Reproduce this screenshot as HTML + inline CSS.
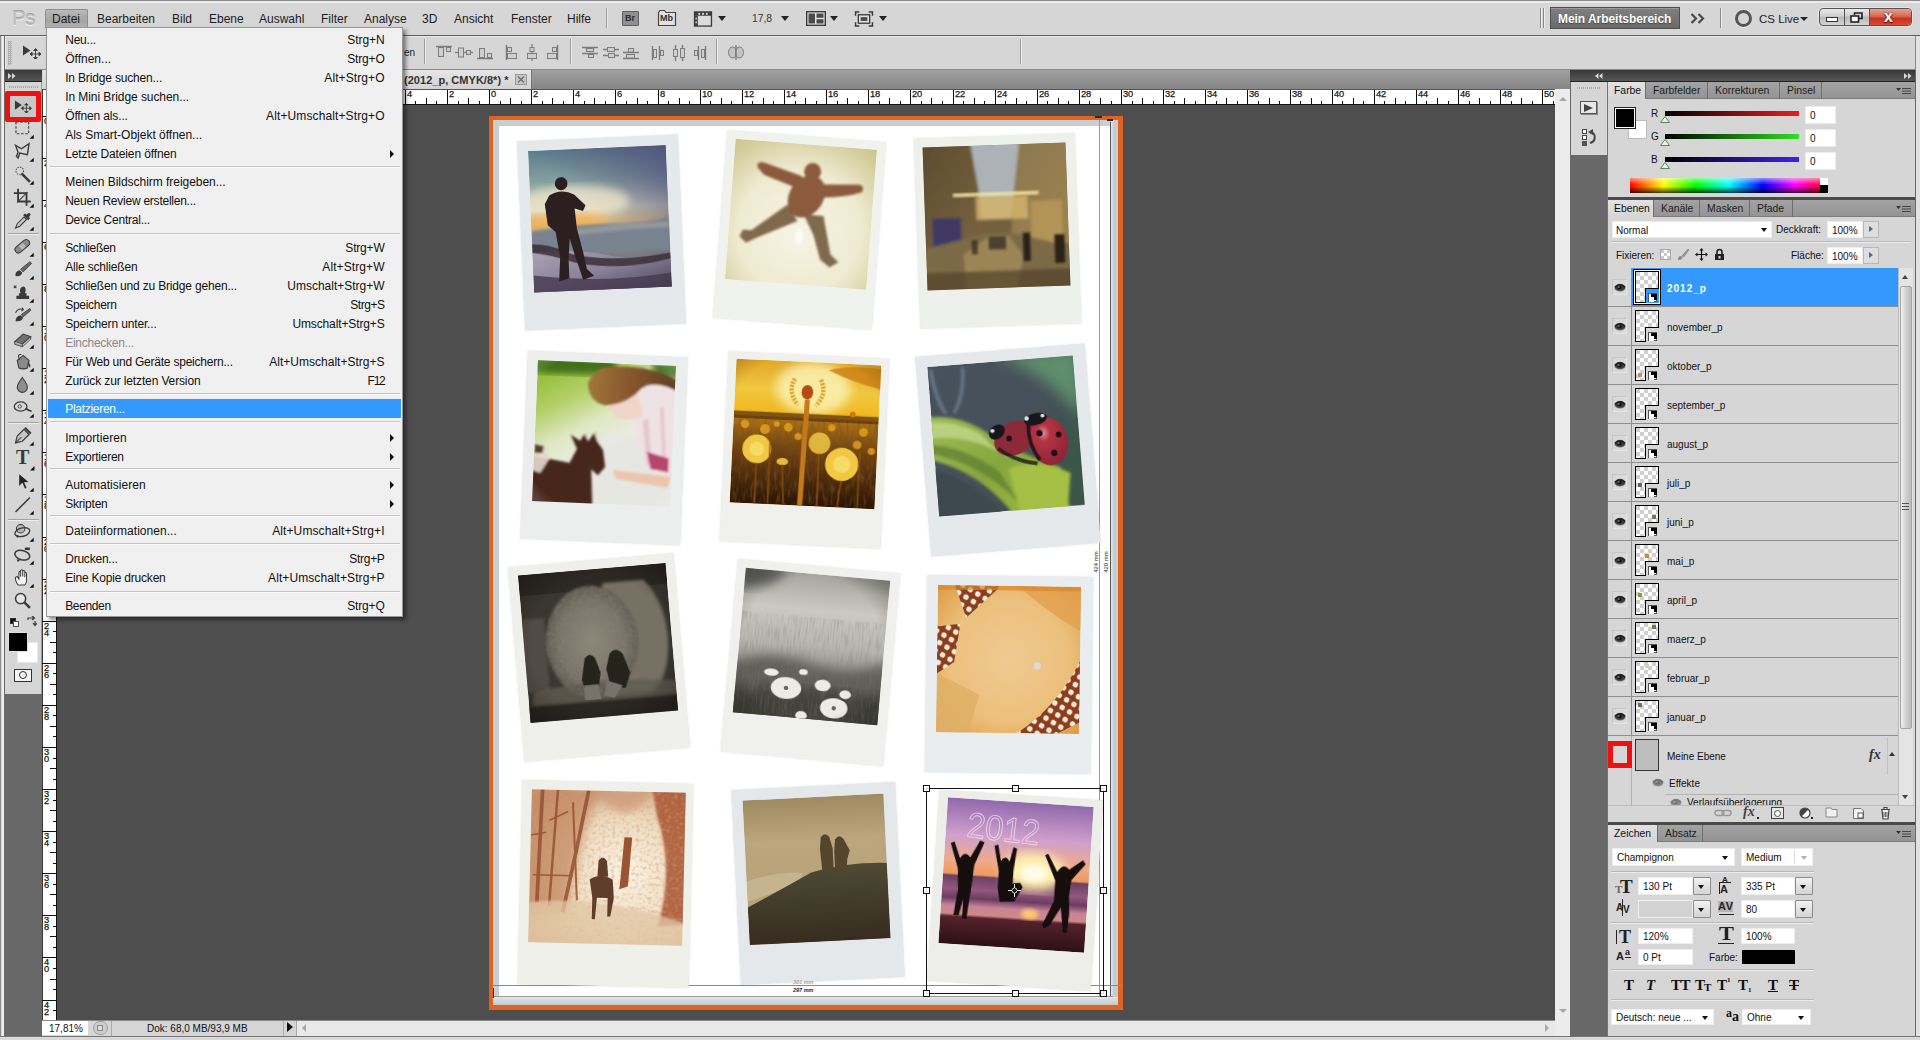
<!DOCTYPE html><html lang="de"><head><meta charset="utf-8"><title>Photoshop</title><style>
*{box-sizing:border-box;margin:0;padding:0}
html,body{width:1920px;height:1040px;overflow:hidden;background:#d6d6d6;font-family:"Liberation Sans",sans-serif;font-size:12px;color:#111}
.a{position:absolute}
.t{position:absolute;white-space:pre;line-height:1}
.mi{position:absolute;left:19px;white-space:pre;line-height:14px;height:14px;font-size:12px;color:#111}
.ms{position:absolute;right:19px;white-space:pre;line-height:14px;height:14px;font-size:12px;color:#111;text-align:right}
.sep{position:absolute;left:3px;right:2px;height:1px;background:#c4c4c4;border-bottom:1px solid #fafafa;box-sizing:content-box}
.arr{position:absolute;right:8px;width:0;height:0;border-left:4px solid #111;border-top:4px solid transparent;border-bottom:4px solid transparent}
.ptab{position:absolute;top:0;height:17px;font-size:11px;line-height:16px;color:#1a1a1a;padding-left:7px;border-right:1px solid #777;text-shadow:0 0 0.4px #222}
.ptab.on{background:#d6d6d6;border-right:none;color:#111}
.inp{position:absolute;background:#fff;border:1px solid #e8e8e8;font-size:10px;line-height:1;color:#111;white-space:pre}
.lname{position:absolute;left:60px;font-size:10px;line-height:12px;white-space:pre;color:#111}
</style></head><body>
<div class="a" style="left:0px;top:0px;width:1920px;height:1px;background:#8c8c8c"></div>
<div class="a" style="left:0px;top:1px;width:1920px;height:2px;background:#ececec"></div>
<div class="a" style="left:0px;top:35px;width:1920px;height:1px;background:#5c5c5c"></div>
<div class="t" style="left:12px;top:7px;font-size:20.5px;font-weight:normal;color:#bdbdbd;letter-spacing:-0.5px;text-shadow:0 1px 0 #f2f2f2,0 -1px 0 #a2a2a2;line-height:22px">Ps</div>
<div class="a" style="left:45px;top:9px;width:43px;height:19px;background:linear-gradient(#b9b9b9,#a4a4a4 60%,#b4b4b4);border:1px solid #8f8f8f;border-bottom:none;border-radius:2px 2px 0 0"></div>
<div class="t" style="left:52px;top:12px;font-size:12px;line-height:14px;color:#1c1c1c">Datei</div>
<div class="t" style="left:97px;top:12px;font-size:12px;line-height:14px;color:#1c1c1c">Bearbeiten</div>
<div class="t" style="left:172px;top:12px;font-size:12px;line-height:14px;color:#1c1c1c">Bild</div>
<div class="t" style="left:209px;top:12px;font-size:12px;line-height:14px;color:#1c1c1c">Ebene</div>
<div class="t" style="left:259px;top:12px;font-size:12px;line-height:14px;color:#1c1c1c">Auswahl</div>
<div class="t" style="left:321px;top:12px;font-size:12px;line-height:14px;color:#1c1c1c">Filter</div>
<div class="t" style="left:364px;top:12px;font-size:12px;line-height:14px;color:#1c1c1c">Analyse</div>
<div class="t" style="left:422px;top:12px;font-size:12px;line-height:14px;color:#1c1c1c">3D</div>
<div class="t" style="left:454px;top:12px;font-size:12px;line-height:14px;color:#1c1c1c">Ansicht</div>
<div class="t" style="left:511px;top:12px;font-size:12px;line-height:14px;color:#1c1c1c">Fenster</div>
<div class="t" style="left:567px;top:12px;font-size:12px;line-height:14px;color:#1c1c1c">Hilfe</div>
<div class="a" style="left:606px;top:8px;width:1px;height:20px;background:#9a9a9a"></div>
<div class="a" style="left:607px;top:8px;width:1px;height:20px;background:#ececec"></div>
<div class="a" style="left:622px;top:11px;width:17px;height:15px;background:#8f8f8f;border:1px solid #5e5e5e;border-radius:1px"></div>
<div class="t" style="left:625px;top:14px;font-size:9px;font-weight:bold;color:#2e2e2e">Br</div>
<svg class="a" style="left:657px;top:9px" width="20" height="18" viewBox="0 0 20 18"><path d="M1.5 3.5 L1.5 16.5 L18.5 16.5 L18.5 3.5 L9 3.5 L7.5 1.5 L3 1.5 Z" fill="#e2e2e2" stroke="#444" stroke-width="1.2"/></svg>
<div class="t" style="left:660px;top:14px;font-size:9px;font-weight:bold;color:#2e2e2e">Mb</div>
<svg class="a" style="left:693px;top:11px" width="20" height="16" viewBox="0 0 20 17"><rect x="1" y="1" width="18" height="15" fill="#dcdcdc" stroke="#3c3c3c" stroke-width="1.4"/><rect x="1" y="1" width="18" height="4" fill="#3c3c3c"/><rect x="1" y="5" width="3.5" height="11" fill="#3c3c3c"/><g fill="#dcdcdc"><rect x="5" y="2" width="2" height="2"/><rect x="9" y="2" width="2" height="2"/><rect x="13" y="2" width="2" height="2"/><rect x="2" y="7" width="1.5" height="2"/><rect x="2" y="11" width="1.5" height="2"/></g></svg>
<div class="a" style="left:718px;top:16px;width:0;height:0;border-left:4.0px solid transparent;border-right:4.0px solid transparent;border-top:5px solid #222"></div>
<div class="t" style="left:752px;top:14px;font-size:10.3px;color:#333">17,8</div>
<div class="a" style="left:781px;top:16px;width:0;height:0;border-left:4.0px solid transparent;border-right:4.0px solid transparent;border-top:5px solid #222"></div>
<svg class="a" style="left:806px;top:11px" width="20" height="15" viewBox="0 0 20 15"><rect x="0.7" y="0.7" width="18.6" height="13.6" fill="#e6e6e6" stroke="#3a3a3a" stroke-width="1.4"/><rect x="2.5" y="2.5" width="6.5" height="10" fill="#4a4a4a"/><rect x="10.5" y="2.5" width="7" height="4.3" fill="#4a4a4a"/><rect x="10.5" y="8.2" width="7" height="4.3" fill="#4a4a4a"/></svg>
<div class="a" style="left:830px;top:16px;width:0;height:0;border-left:4.0px solid transparent;border-right:4.0px solid transparent;border-top:5px solid #222"></div>
<svg class="a" style="left:854px;top:11px" width="20" height="16" viewBox="0 0 20 17"><path d="M1 5V1H5M15 1H19V5M19 12V16H15M5 16H1V12" fill="none" stroke="#3a3a3a" stroke-width="1.6"/><rect x="4" y="4" width="12" height="9" fill="#e0e0e0" stroke="#3a3a3a" stroke-width="1.4"/><rect x="6.5" y="6.5" width="7" height="4" fill="#4a4a4a"/></svg>
<div class="a" style="left:879px;top:16px;width:0;height:0;border-left:4.0px solid transparent;border-right:4.0px solid transparent;border-top:5px solid #222"></div>
<div class="a" style="left:1540px;top:8px;width:1px;height:20px;background:#8a8a8a"></div>
<div class="a" style="left:1541px;top:8px;width:1px;height:20px;background:#efefef"></div>
<div class="a" style="left:1543px;top:8px;width:1px;height:20px;background:#8a8a8a"></div>
<div class="a" style="left:1544px;top:8px;width:1px;height:20px;background:#efefef"></div>
<div class="a" style="left:1550px;top:7px;width:130px;height:22px;background:linear-gradient(#808080,#6a6a6a);border:1px solid #4f4f4f;box-shadow:inset 0 1px 0 #999"></div>
<div class="t" style="left:1558px;top:12px;font-size:12px;font-weight:bold;color:#fff;line-height:14px;text-shadow:0 1px 1px #444;letter-spacing:-0.05px">Mein Arbeitsbereich</div>
<svg class="a" style="left:1690px;top:13px" width="16" height="11" viewBox="0 0 16 11"><path d="M1.5 1 L6 5.5 L1.5 10 M8.5 1 L13 5.5 L8.5 10" fill="none" stroke="#4a4a4a" stroke-width="2.2"/></svg>
<div class="a" style="left:1720px;top:8px;width:1px;height:20px;background:#8a8a8a"></div>
<div class="a" style="left:1721px;top:8px;width:1px;height:20px;background:#efefef"></div>
<div class="a" style="left:1735px;top:10px;width:17px;height:17px;border:3.5px solid #555;border-radius:50%;box-shadow:0 1px 0 #eee"></div>
<div class="t" style="left:1759px;top:12px;font-size:11.5px;color:#222;line-height:14px">CS Live</div>
<div class="a" style="left:1800px;top:17px;width:0;height:0;border-left:4.0px solid transparent;border-right:4.0px solid transparent;border-top:4px solid #222"></div>
<div class="a" style="left:1819px;top:8px;width:93px;height:18px;border:1px solid #555;border-radius:4px;background:linear-gradient(#e9e9e9,#cfcfcf 45%,#b9b9b9 50%,#d4d4d4);overflow:hidden;box-shadow:0 0 0 1px #e6e6e6"><div class="a" style="left:24px;top:0;width:1px;height:18px;background:#555"></div><div class="a" style="left:49px;top:0;width:44px;height:18px;background:linear-gradient(#e8a090,#d8604c 45%,#c8301c 50%,#d8553f);border-left:1px solid #555"></div><div class="a" style="left:6px;top:8px;width:12px;height:5px;background:#fff;border:1px solid #333"></div><svg class="a" style="left:30px;top:3px" width="13" height="11" viewBox="0 0 13 11"><path d="M4.5 3V1H12V6.5H9" fill="none" stroke="#222" stroke-width="1.6"/><rect x="1" y="4" width="7.5" height="6" fill="#fff" stroke="#222" stroke-width="1.6"/></svg><div class="t" style="left:64px;top:-1px;font-size:16px;font-weight:bold;color:#fff;text-shadow:0 0 2px #611,0 1px 1px #400;line-height:18px">x</div></div>
<div class="a" style="left:4px;top:36px;width:1912px;height:34px;background:#d6d6d6;border:1px solid #8a8a8a;border-top:none;box-shadow:inset 1px 1px 0 #ececec"></div>
<div class="a" style="left:8px;top:41px;width:4px;height:24px;background:repeating-linear-gradient(#a8a8a8 0 1px,transparent 1px 2px),repeating-linear-gradient(90deg,#a8a8a8 0 1px,transparent 1px 2px);opacity:.8"></div>
<svg class="a" style="left:22px;top:45px" width="20" height="14" viewBox="0 0 20 14"><path d="M1 0.5 L1 10.5 L8.5 5.5 Z" fill="#3a3a3a"/><path d="M13.5 4.5V13.5M9 9H18M13.5 3.5l-1.8 2h3.6zM13.5 14.5l-1.8 -2h3.6zM8 9l2 -1.8v3.6zM19 9l-2 -1.8v3.6z" stroke="#3a3a3a" stroke-width=".9" fill="#3a3a3a"/></svg>
<div class="t" style="left:404px;top:48px;font-size:10px;color:#222">en</div>
<div class="a" style="left:424px;top:39px;width:1px;height:25px;background:#9c9c9c"></div>
<div class="a" style="left:425px;top:39px;width:1px;height:25px;background:#eee"></div>
<div class="a" style="left:570px;top:39px;width:1px;height:25px;background:#9c9c9c"></div>
<div class="a" style="left:571px;top:39px;width:1px;height:25px;background:#eee"></div>
<div class="a" style="left:716px;top:39px;width:1px;height:25px;background:#9c9c9c"></div>
<div class="a" style="left:717px;top:39px;width:1px;height:25px;background:#eee"></div>
<div class="a" style="left:1020px;top:39px;width:1px;height:25px;background:#9c9c9c"></div>
<div class="a" style="left:1021px;top:39px;width:1px;height:25px;background:#eee"></div>
<svg class="a" style="left:435px;top:44px" width="18" height="17" viewBox="0 0 18 17"><path d="M1 2.5H17" stroke="#7c7c7c" stroke-width="1.5"/><rect x="3.5" y="3.5" width="5" height="9" fill="#cfcfcf" stroke="#7c7c7c"/><rect x="11.5" y="3.5" width="4" height="4" fill="#cfcfcf" stroke="#7c7c7c"/></svg>
<svg class="a" style="left:455px;top:44px" width="18" height="17" viewBox="0 0 18 17"><path d="M0 8.5H18" stroke="#7c7c7c" stroke-width="1.3"/><rect x="3.5" y="4" width="5" height="9" fill="#cfcfcf" stroke="#7c7c7c"/><rect x="11.5" y="6.5" width="4" height="4" fill="#cfcfcf" stroke="#7c7c7c"/></svg>
<svg class="a" style="left:476px;top:44px" width="18" height="17" viewBox="0 0 18 17"><path d="M1 14.5H17" stroke="#7c7c7c" stroke-width="1.5"/><rect x="3.5" y="4.5" width="5" height="9" fill="#cfcfcf" stroke="#7c7c7c"/><rect x="11.5" y="9.5" width="4" height="4" fill="#cfcfcf" stroke="#7c7c7c"/></svg>
<svg class="a" style="left:503px;top:44px" width="18" height="17" viewBox="0 0 18 17"><path d="M3.5 1V16" stroke="#7c7c7c" stroke-width="1.5"/><rect x="4.5" y="3.5" width="4" height="4" fill="#cfcfcf" stroke="#7c7c7c"/><rect x="4.5" y="9.5" width="9" height="5" fill="#cfcfcf" stroke="#7c7c7c"/></svg>
<svg class="a" style="left:523px;top:44px" width="18" height="17" viewBox="0 0 18 17"><path d="M9 0V17" stroke="#7c7c7c" stroke-width="1.3"/><rect x="7" y="3.5" width="4" height="4" fill="#cfcfcf" stroke="#7c7c7c"/><rect x="4.5" y="9.5" width="9" height="5" fill="#cfcfcf" stroke="#7c7c7c"/></svg>
<svg class="a" style="left:543px;top:44px" width="18" height="17" viewBox="0 0 18 17"><path d="M14.5 1V16" stroke="#7c7c7c" stroke-width="1.5"/><rect x="9.500" y="3.5" width="4" height="4" fill="#cfcfcf" stroke="#7c7c7c"/><rect x="4.5" y="9.500" width="9" height="5" fill="#cfcfcf" stroke="#7c7c7c"/></svg>
<svg class="a" style="left:581px;top:44px" width="18" height="17" viewBox="0 0 18 17"><path d="M1 3.5H17M1 9.500H17" stroke="#7c7c7c" stroke-width="1.4"/><rect x="5.500" y="4.500" width="7" height="3" fill="#cfcfcf" stroke="#7c7c7c"/><rect x="7.500" y="10.500" width="5" height="3" fill="#cfcfcf" stroke="#7c7c7c"/></svg>
<svg class="a" style="left:602px;top:44px" width="18" height="17" viewBox="0 0 18 17"><path d="M1 5.500H17M1 11.500H17" stroke="#7c7c7c" stroke-width="1.4"/><rect x="5.500" y="3.500" width="7" height="4" fill="#cfcfcf" stroke="#7c7c7c"/><rect x="6.500" y="9.500" width="6" height="4" fill="#cfcfcf" stroke="#7c7c7c"/></svg>
<svg class="a" style="left:622px;top:44px" width="18" height="17" viewBox="0 0 18 17"><path d="M1 8.500H17M1 14.500H17" stroke="#7c7c7c" stroke-width="1.4"/><rect x="6.500" y="4.500" width="5" height="3.500" fill="#cfcfcf" stroke="#7c7c7c"/><rect x="4.500" y="10.500" width="8" height="3.500" fill="#cfcfcf" stroke="#7c7c7c"/></svg>
<svg class="a" style="left:649px;top:44px" width="18" height="17" viewBox="0 0 18 17"><path d="M3.500 2V16M10.500 2V16" stroke="#7c7c7c" stroke-width="1.4"/><rect x="4.500" y="5.500" width="3" height="8" fill="#cfcfcf" stroke="#7c7c7c"/><rect x="11.500" y="6.500" width="3" height="5" fill="#cfcfcf" stroke="#7c7c7c"/></svg>
<svg class="a" style="left:670px;top:44px" width="18" height="17" viewBox="0 0 18 17"><path d="M5.500 1V17M12.500 1V17" stroke="#7c7c7c" stroke-width="1.4"/><rect x="3.500" y="5.500" width="4" height="7" fill="#cfcfcf" stroke="#7c7c7c"/><rect x="10.500" y="4.500" width="4" height="9" fill="#cfcfcf" stroke="#7c7c7c"/></svg>
<svg class="a" style="left:690px;top:44px" width="18" height="17" viewBox="0 0 18 17"><path d="M8.500 2V16M15.500 2V16" stroke="#7c7c7c" stroke-width="1.4"/><rect x="4.500" y="6.500" width="3" height="5" fill="#cfcfcf" stroke="#7c7c7c"/><rect x="11.500" y="5.500" width="3" height="8" fill="#cfcfcf" stroke="#7c7c7c"/></svg>
<svg class="a" style="left:727px;top:44px" width="18" height="17" viewBox="0 0 18 17"><ellipse cx="5.500" cy="8.500" rx="4" ry="5.500" fill="#c4c4c4" stroke="#7c7c7c"/><ellipse cx="12.500" cy="8.500" rx="4" ry="5.500" fill="#c4c4c4" stroke="#7c7c7c"/><path d="M9 1V16" stroke="#7c7c7c" stroke-width="1.4"/></svg>
<div class="a" style="left:43px;top:70px;width:1527px;height:19px;background:linear-gradient(#a0a0a0,#868686)"></div>
<div class="a" style="left:43px;top:70px;width:489px;height:19px;background:linear-gradient(#e6e6e6,#d3d3d3);border-right:1px solid #777"></div>
<div class="t" style="left:404px;top:74px;font-size:11px;font-weight:bold;color:#333;line-height:12px;letter-spacing:.03px">(2012_p, CMYK/8*) *</div>
<div class="a" style="left:515px;top:74px;width:12px;height:11px;background:#c6c6c6;border:1px solid #9a9a9a"><svg width="10" height="9" viewBox="0 0 10 9" style="display:block"><path d="M2 1.5L8 7.5M8 1.5L2 7.500" stroke="#6e6e6e" stroke-width="1.3"/></svg></div>
<div class="a" style="left:42px;top:89px;width:1513px;height:15px;background:#fff;border-top:1px solid #555"></div>
<div class="a" style="left:42px;top:104px;width:1513px;height:1px;background:#111"></div>
<svg class="a" style="left:57px;top:89px" width="1499" height="16" viewBox="57 89 1499 16" shape-rendering="crispEdges"><rect x="257" y="98" width="1" height="6" fill="#111"/><rect x="268" y="101" width="1" height="3" fill="#111"/><rect x="278" y="90" width="1" height="14" fill="#111"/><rect x="289" y="101" width="1" height="3" fill="#111"/><rect x="300" y="98" width="1" height="6" fill="#111"/><rect x="310" y="101" width="1" height="3" fill="#111"/><rect x="321" y="90" width="1" height="14" fill="#111"/><rect x="331" y="101" width="1" height="3" fill="#111"/><rect x="342" y="98" width="1" height="6" fill="#111"/><rect x="352" y="101" width="1" height="3" fill="#111"/><rect x="363" y="90" width="1" height="14" fill="#111"/><rect x="373" y="101" width="1" height="3" fill="#111"/><rect x="384" y="98" width="1" height="6" fill="#111"/><rect x="394" y="101" width="1" height="3" fill="#111"/><rect x="405" y="90" width="1" height="14" fill="#111"/><rect x="415" y="101" width="1" height="3" fill="#111"/><rect x="426" y="98" width="1" height="6" fill="#111"/><rect x="436" y="101" width="1" height="3" fill="#111"/><rect x="447" y="90" width="1" height="14" fill="#111"/><rect x="458" y="101" width="1" height="3" fill="#111"/><rect x="468" y="98" width="1" height="6" fill="#111"/><rect x="479" y="101" width="1" height="3" fill="#111"/><rect x="489" y="90" width="1" height="14" fill="#111"/><rect x="500" y="101" width="1" height="3" fill="#111"/><rect x="510" y="98" width="1" height="6" fill="#111"/><rect x="521" y="101" width="1" height="3" fill="#111"/><rect x="531" y="90" width="1" height="14" fill="#111"/><rect x="542" y="101" width="1" height="3" fill="#111"/><rect x="552" y="98" width="1" height="6" fill="#111"/><rect x="563" y="101" width="1" height="3" fill="#111"/><rect x="573" y="90" width="1" height="14" fill="#111"/><rect x="584" y="101" width="1" height="3" fill="#111"/><rect x="594" y="98" width="1" height="6" fill="#111"/><rect x="605" y="101" width="1" height="3" fill="#111"/><rect x="615" y="90" width="1" height="14" fill="#111"/><rect x="626" y="101" width="1" height="3" fill="#111"/><rect x="637" y="98" width="1" height="6" fill="#111"/><rect x="647" y="101" width="1" height="3" fill="#111"/><rect x="658" y="90" width="1" height="14" fill="#111"/><rect x="668" y="101" width="1" height="3" fill="#111"/><rect x="679" y="98" width="1" height="6" fill="#111"/><rect x="689" y="101" width="1" height="3" fill="#111"/><rect x="700" y="90" width="1" height="14" fill="#111"/><rect x="710" y="101" width="1" height="3" fill="#111"/><rect x="721" y="98" width="1" height="6" fill="#111"/><rect x="731" y="101" width="1" height="3" fill="#111"/><rect x="742" y="90" width="1" height="14" fill="#111"/><rect x="752" y="101" width="1" height="3" fill="#111"/><rect x="763" y="98" width="1" height="6" fill="#111"/><rect x="773" y="101" width="1" height="3" fill="#111"/><rect x="784" y="90" width="1" height="14" fill="#111"/><rect x="795" y="101" width="1" height="3" fill="#111"/><rect x="805" y="98" width="1" height="6" fill="#111"/><rect x="816" y="101" width="1" height="3" fill="#111"/><rect x="826" y="90" width="1" height="14" fill="#111"/><rect x="837" y="101" width="1" height="3" fill="#111"/><rect x="847" y="98" width="1" height="6" fill="#111"/><rect x="858" y="101" width="1" height="3" fill="#111"/><rect x="868" y="90" width="1" height="14" fill="#111"/><rect x="879" y="101" width="1" height="3" fill="#111"/><rect x="889" y="98" width="1" height="6" fill="#111"/><rect x="900" y="101" width="1" height="3" fill="#111"/><rect x="910" y="90" width="1" height="14" fill="#111"/><rect x="921" y="101" width="1" height="3" fill="#111"/><rect x="931" y="98" width="1" height="6" fill="#111"/><rect x="942" y="101" width="1" height="3" fill="#111"/><rect x="953" y="90" width="1" height="14" fill="#111"/><rect x="963" y="101" width="1" height="3" fill="#111"/><rect x="974" y="98" width="1" height="6" fill="#111"/><rect x="984" y="101" width="1" height="3" fill="#111"/><rect x="995" y="90" width="1" height="14" fill="#111"/><rect x="1005" y="101" width="1" height="3" fill="#111"/><rect x="1016" y="98" width="1" height="6" fill="#111"/><rect x="1026" y="101" width="1" height="3" fill="#111"/><rect x="1037" y="90" width="1" height="14" fill="#111"/><rect x="1047" y="101" width="1" height="3" fill="#111"/><rect x="1058" y="98" width="1" height="6" fill="#111"/><rect x="1068" y="101" width="1" height="3" fill="#111"/><rect x="1079" y="90" width="1" height="14" fill="#111"/><rect x="1089" y="101" width="1" height="3" fill="#111"/><rect x="1100" y="98" width="1" height="6" fill="#111"/><rect x="1111" y="101" width="1" height="3" fill="#111"/><rect x="1121" y="90" width="1" height="14" fill="#111"/><rect x="1132" y="101" width="1" height="3" fill="#111"/><rect x="1142" y="98" width="1" height="6" fill="#111"/><rect x="1153" y="101" width="1" height="3" fill="#111"/><rect x="1163" y="90" width="1" height="14" fill="#111"/><rect x="1174" y="101" width="1" height="3" fill="#111"/><rect x="1184" y="98" width="1" height="6" fill="#111"/><rect x="1195" y="101" width="1" height="3" fill="#111"/><rect x="1205" y="90" width="1" height="14" fill="#111"/><rect x="1216" y="101" width="1" height="3" fill="#111"/><rect x="1226" y="98" width="1" height="6" fill="#111"/><rect x="1237" y="101" width="1" height="3" fill="#111"/><rect x="1247" y="90" width="1" height="14" fill="#111"/><rect x="1258" y="101" width="1" height="3" fill="#111"/><rect x="1269" y="98" width="1" height="6" fill="#111"/><rect x="1279" y="101" width="1" height="3" fill="#111"/><rect x="1290" y="90" width="1" height="14" fill="#111"/><rect x="1300" y="101" width="1" height="3" fill="#111"/><rect x="1311" y="98" width="1" height="6" fill="#111"/><rect x="1321" y="101" width="1" height="3" fill="#111"/><rect x="1332" y="90" width="1" height="14" fill="#111"/><rect x="1342" y="101" width="1" height="3" fill="#111"/><rect x="1353" y="98" width="1" height="6" fill="#111"/><rect x="1363" y="101" width="1" height="3" fill="#111"/><rect x="1374" y="90" width="1" height="14" fill="#111"/><rect x="1384" y="101" width="1" height="3" fill="#111"/><rect x="1395" y="98" width="1" height="6" fill="#111"/><rect x="1405" y="101" width="1" height="3" fill="#111"/><rect x="1416" y="90" width="1" height="14" fill="#111"/><rect x="1426" y="101" width="1" height="3" fill="#111"/><rect x="1437" y="98" width="1" height="6" fill="#111"/><rect x="1448" y="101" width="1" height="3" fill="#111"/><rect x="1458" y="90" width="1" height="14" fill="#111"/><rect x="1469" y="101" width="1" height="3" fill="#111"/><rect x="1479" y="98" width="1" height="6" fill="#111"/><rect x="1490" y="101" width="1" height="3" fill="#111"/><rect x="1500" y="90" width="1" height="14" fill="#111"/><rect x="1511" y="101" width="1" height="3" fill="#111"/><rect x="1521" y="98" width="1" height="6" fill="#111"/><rect x="1532" y="101" width="1" height="3" fill="#111"/><rect x="1542" y="90" width="1" height="14" fill="#111"/><rect x="1553" y="101" width="1" height="3" fill="#111"/></svg>
<div class="t" style="left:70px;top:90px;font-size:9.3px;color:#111;line-height:9px;letter-spacing:-0.1px;-webkit-text-stroke:.25px #222">20</div>
<div class="t" style="left:112px;top:90px;font-size:9.3px;color:#111;line-height:9px;letter-spacing:-0.1px;-webkit-text-stroke:.25px #222">18</div>
<div class="t" style="left:154px;top:90px;font-size:9.3px;color:#111;line-height:9px;letter-spacing:-0.1px;-webkit-text-stroke:.25px #222">16</div>
<div class="t" style="left:196px;top:90px;font-size:9.3px;color:#111;line-height:9px;letter-spacing:-0.1px;-webkit-text-stroke:.25px #222">14</div>
<div class="t" style="left:238px;top:90px;font-size:9.3px;color:#111;line-height:9px;letter-spacing:-0.1px;-webkit-text-stroke:.25px #222">12</div>
<div class="t" style="left:280px;top:90px;font-size:9.3px;color:#111;line-height:9px;letter-spacing:-0.1px;-webkit-text-stroke:.25px #222">10</div>
<div class="t" style="left:323px;top:90px;font-size:9.3px;color:#111;line-height:9px;letter-spacing:-0.1px;-webkit-text-stroke:.25px #222">8</div>
<div class="t" style="left:365px;top:90px;font-size:9.3px;color:#111;line-height:9px;letter-spacing:-0.1px;-webkit-text-stroke:.25px #222">6</div>
<div class="t" style="left:407px;top:90px;font-size:9.3px;color:#111;line-height:9px;letter-spacing:-0.1px;-webkit-text-stroke:.25px #222">4</div>
<div class="t" style="left:449px;top:90px;font-size:9.3px;color:#111;line-height:9px;letter-spacing:-0.1px;-webkit-text-stroke:.25px #222">2</div>
<div class="t" style="left:491px;top:90px;font-size:9.3px;color:#111;line-height:9px;letter-spacing:-0.1px;-webkit-text-stroke:.25px #222">0</div>
<div class="t" style="left:533px;top:90px;font-size:9.3px;color:#111;line-height:9px;letter-spacing:-0.1px;-webkit-text-stroke:.25px #222">2</div>
<div class="t" style="left:575px;top:90px;font-size:9.3px;color:#111;line-height:9px;letter-spacing:-0.1px;-webkit-text-stroke:.25px #222">4</div>
<div class="t" style="left:617px;top:90px;font-size:9.3px;color:#111;line-height:9px;letter-spacing:-0.1px;-webkit-text-stroke:.25px #222">6</div>
<div class="t" style="left:660px;top:90px;font-size:9.3px;color:#111;line-height:9px;letter-spacing:-0.1px;-webkit-text-stroke:.25px #222">8</div>
<div class="t" style="left:702px;top:90px;font-size:9.3px;color:#111;line-height:9px;letter-spacing:-0.1px;-webkit-text-stroke:.25px #222">10</div>
<div class="t" style="left:744px;top:90px;font-size:9.3px;color:#111;line-height:9px;letter-spacing:-0.1px;-webkit-text-stroke:.25px #222">12</div>
<div class="t" style="left:786px;top:90px;font-size:9.3px;color:#111;line-height:9px;letter-spacing:-0.1px;-webkit-text-stroke:.25px #222">14</div>
<div class="t" style="left:828px;top:90px;font-size:9.3px;color:#111;line-height:9px;letter-spacing:-0.1px;-webkit-text-stroke:.25px #222">16</div>
<div class="t" style="left:870px;top:90px;font-size:9.3px;color:#111;line-height:9px;letter-spacing:-0.1px;-webkit-text-stroke:.25px #222">18</div>
<div class="t" style="left:912px;top:90px;font-size:9.3px;color:#111;line-height:9px;letter-spacing:-0.1px;-webkit-text-stroke:.25px #222">20</div>
<div class="t" style="left:955px;top:90px;font-size:9.3px;color:#111;line-height:9px;letter-spacing:-0.1px;-webkit-text-stroke:.25px #222">22</div>
<div class="t" style="left:997px;top:90px;font-size:9.3px;color:#111;line-height:9px;letter-spacing:-0.1px;-webkit-text-stroke:.25px #222">24</div>
<div class="t" style="left:1039px;top:90px;font-size:9.3px;color:#111;line-height:9px;letter-spacing:-0.1px;-webkit-text-stroke:.25px #222">26</div>
<div class="t" style="left:1081px;top:90px;font-size:9.3px;color:#111;line-height:9px;letter-spacing:-0.1px;-webkit-text-stroke:.25px #222">28</div>
<div class="t" style="left:1123px;top:90px;font-size:9.3px;color:#111;line-height:9px;letter-spacing:-0.1px;-webkit-text-stroke:.25px #222">30</div>
<div class="t" style="left:1165px;top:90px;font-size:9.3px;color:#111;line-height:9px;letter-spacing:-0.1px;-webkit-text-stroke:.25px #222">32</div>
<div class="t" style="left:1207px;top:90px;font-size:9.3px;color:#111;line-height:9px;letter-spacing:-0.1px;-webkit-text-stroke:.25px #222">34</div>
<div class="t" style="left:1249px;top:90px;font-size:9.3px;color:#111;line-height:9px;letter-spacing:-0.1px;-webkit-text-stroke:.25px #222">36</div>
<div class="t" style="left:1292px;top:90px;font-size:9.3px;color:#111;line-height:9px;letter-spacing:-0.1px;-webkit-text-stroke:.25px #222">38</div>
<div class="t" style="left:1334px;top:90px;font-size:9.3px;color:#111;line-height:9px;letter-spacing:-0.1px;-webkit-text-stroke:.25px #222">40</div>
<div class="t" style="left:1376px;top:90px;font-size:9.3px;color:#111;line-height:9px;letter-spacing:-0.1px;-webkit-text-stroke:.25px #222">42</div>
<div class="t" style="left:1418px;top:90px;font-size:9.3px;color:#111;line-height:9px;letter-spacing:-0.1px;-webkit-text-stroke:.25px #222">44</div>
<div class="t" style="left:1460px;top:90px;font-size:9.3px;color:#111;line-height:9px;letter-spacing:-0.1px;-webkit-text-stroke:.25px #222">46</div>
<div class="t" style="left:1502px;top:90px;font-size:9.3px;color:#111;line-height:9px;letter-spacing:-0.1px;-webkit-text-stroke:.25px #222">48</div>
<div class="t" style="left:1544px;top:90px;font-size:9.3px;color:#111;line-height:9px;letter-spacing:-0.1px;-webkit-text-stroke:.25px #222">50</div>
<div class="a" style="left:42px;top:104px;width:15px;height:916px;background:#fff"></div>
<div class="a" style="left:56px;top:104px;width:1px;height:916px;background:#111"></div>
<div class="a" style="left:42px;top:89px;width:1px;height:931px;background:#3a3a3a"></div>
<svg class="a" style="left:42px;top:104px" width="15" height="916" viewBox="42 104 15 916" shape-rendering="crispEdges"><rect x="53" y="105" width="3" height="1" fill="#111"/><rect x="42" y="116" width="14" height="1" fill="#111"/><rect x="53" y="126" width="3" height="1" fill="#111"/><rect x="50" y="137" width="6" height="1" fill="#111"/><rect x="53" y="147" width="3" height="1" fill="#111"/><rect x="42" y="158" width="14" height="1" fill="#111"/><rect x="53" y="168" width="3" height="1" fill="#111"/><rect x="50" y="179" width="6" height="1" fill="#111"/><rect x="53" y="189" width="3" height="1" fill="#111"/><rect x="42" y="200" width="14" height="1" fill="#111"/><rect x="53" y="210" width="3" height="1" fill="#111"/><rect x="50" y="221" width="6" height="1" fill="#111"/><rect x="53" y="231" width="3" height="1" fill="#111"/><rect x="42" y="242" width="14" height="1" fill="#111"/><rect x="53" y="252" width="3" height="1" fill="#111"/><rect x="50" y="263" width="6" height="1" fill="#111"/><rect x="53" y="273" width="3" height="1" fill="#111"/><rect x="42" y="284" width="14" height="1" fill="#111"/><rect x="53" y="294" width="3" height="1" fill="#111"/><rect x="50" y="305" width="6" height="1" fill="#111"/><rect x="53" y="316" width="3" height="1" fill="#111"/><rect x="42" y="326" width="14" height="1" fill="#111"/><rect x="53" y="337" width="3" height="1" fill="#111"/><rect x="50" y="347" width="6" height="1" fill="#111"/><rect x="53" y="358" width="3" height="1" fill="#111"/><rect x="42" y="368" width="14" height="1" fill="#111"/><rect x="53" y="379" width="3" height="1" fill="#111"/><rect x="50" y="389" width="6" height="1" fill="#111"/><rect x="53" y="400" width="3" height="1" fill="#111"/><rect x="42" y="410" width="14" height="1" fill="#111"/><rect x="53" y="421" width="3" height="1" fill="#111"/><rect x="50" y="431" width="6" height="1" fill="#111"/><rect x="53" y="442" width="3" height="1" fill="#111"/><rect x="42" y="452" width="14" height="1" fill="#111"/><rect x="53" y="463" width="3" height="1" fill="#111"/><rect x="50" y="473" width="6" height="1" fill="#111"/><rect x="53" y="484" width="3" height="1" fill="#111"/><rect x="42" y="494" width="14" height="1" fill="#111"/><rect x="53" y="505" width="3" height="1" fill="#111"/><rect x="50" y="515" width="6" height="1" fill="#111"/><rect x="53" y="526" width="3" height="1" fill="#111"/><rect x="42" y="537" width="14" height="1" fill="#111"/><rect x="53" y="547" width="3" height="1" fill="#111"/><rect x="50" y="558" width="6" height="1" fill="#111"/><rect x="53" y="568" width="3" height="1" fill="#111"/><rect x="42" y="579" width="14" height="1" fill="#111"/><rect x="53" y="589" width="3" height="1" fill="#111"/><rect x="50" y="600" width="6" height="1" fill="#111"/><rect x="53" y="610" width="3" height="1" fill="#111"/><rect x="42" y="621" width="14" height="1" fill="#111"/><rect x="53" y="631" width="3" height="1" fill="#111"/><rect x="50" y="642" width="6" height="1" fill="#111"/><rect x="53" y="652" width="3" height="1" fill="#111"/><rect x="42" y="663" width="14" height="1" fill="#111"/><rect x="53" y="673" width="3" height="1" fill="#111"/><rect x="50" y="684" width="6" height="1" fill="#111"/><rect x="53" y="694" width="3" height="1" fill="#111"/><rect x="42" y="705" width="14" height="1" fill="#111"/><rect x="53" y="715" width="3" height="1" fill="#111"/><rect x="50" y="726" width="6" height="1" fill="#111"/><rect x="53" y="736" width="3" height="1" fill="#111"/><rect x="42" y="747" width="14" height="1" fill="#111"/><rect x="53" y="758" width="3" height="1" fill="#111"/><rect x="50" y="768" width="6" height="1" fill="#111"/><rect x="53" y="779" width="3" height="1" fill="#111"/><rect x="42" y="789" width="14" height="1" fill="#111"/><rect x="53" y="800" width="3" height="1" fill="#111"/><rect x="50" y="810" width="6" height="1" fill="#111"/><rect x="53" y="821" width="3" height="1" fill="#111"/><rect x="42" y="831" width="14" height="1" fill="#111"/><rect x="53" y="842" width="3" height="1" fill="#111"/><rect x="50" y="852" width="6" height="1" fill="#111"/><rect x="53" y="863" width="3" height="1" fill="#111"/><rect x="42" y="873" width="14" height="1" fill="#111"/><rect x="53" y="884" width="3" height="1" fill="#111"/><rect x="50" y="894" width="6" height="1" fill="#111"/><rect x="53" y="905" width="3" height="1" fill="#111"/><rect x="42" y="915" width="14" height="1" fill="#111"/><rect x="53" y="926" width="3" height="1" fill="#111"/><rect x="50" y="936" width="6" height="1" fill="#111"/><rect x="53" y="947" width="3" height="1" fill="#111"/><rect x="42" y="957" width="14" height="1" fill="#111"/><rect x="53" y="968" width="3" height="1" fill="#111"/><rect x="50" y="979" width="6" height="1" fill="#111"/><rect x="53" y="989" width="3" height="1" fill="#111"/><rect x="42" y="1000" width="14" height="1" fill="#111"/><rect x="53" y="1010" width="3" height="1" fill="#111"/></svg>
<div class="t" style="left:44px;top:117px;font-size:9.3px;color:#111;line-height:9px;-webkit-text-stroke:.25px #222">0</div>
<div class="t" style="left:44px;top:159px;font-size:9.3px;color:#111;line-height:9px;-webkit-text-stroke:.25px #222">2</div>
<div class="t" style="left:44px;top:201px;font-size:9.3px;color:#111;line-height:9px;-webkit-text-stroke:.25px #222">4</div>
<div class="t" style="left:44px;top:243px;font-size:9.3px;color:#111;line-height:9px;-webkit-text-stroke:.25px #222">6</div>
<div class="t" style="left:44px;top:285px;font-size:9.3px;color:#111;line-height:9px;-webkit-text-stroke:.25px #222">8</div>
<div class="t" style="left:44px;top:327px;font-size:9.3px;color:#111;line-height:9px;-webkit-text-stroke:.25px #222">1</div>
<div class="t" style="left:44px;top:334px;font-size:9.3px;color:#111;line-height:9px;-webkit-text-stroke:.25px #222">0</div>
<div class="t" style="left:44px;top:369px;font-size:9.3px;color:#111;line-height:9px;-webkit-text-stroke:.25px #222">1</div>
<div class="t" style="left:44px;top:376px;font-size:9.3px;color:#111;line-height:9px;-webkit-text-stroke:.25px #222">2</div>
<div class="t" style="left:44px;top:411px;font-size:9.3px;color:#111;line-height:9px;-webkit-text-stroke:.25px #222">1</div>
<div class="t" style="left:44px;top:418px;font-size:9.3px;color:#111;line-height:9px;-webkit-text-stroke:.25px #222">4</div>
<div class="t" style="left:44px;top:453px;font-size:9.3px;color:#111;line-height:9px;-webkit-text-stroke:.25px #222">1</div>
<div class="t" style="left:44px;top:460px;font-size:9.3px;color:#111;line-height:9px;-webkit-text-stroke:.25px #222">6</div>
<div class="t" style="left:44px;top:495px;font-size:9.3px;color:#111;line-height:9px;-webkit-text-stroke:.25px #222">1</div>
<div class="t" style="left:44px;top:502px;font-size:9.3px;color:#111;line-height:9px;-webkit-text-stroke:.25px #222">8</div>
<div class="t" style="left:44px;top:538px;font-size:9.3px;color:#111;line-height:9px;-webkit-text-stroke:.25px #222">2</div>
<div class="t" style="left:44px;top:545px;font-size:9.3px;color:#111;line-height:9px;-webkit-text-stroke:.25px #222">0</div>
<div class="t" style="left:44px;top:580px;font-size:9.3px;color:#111;line-height:9px;-webkit-text-stroke:.25px #222">2</div>
<div class="t" style="left:44px;top:587px;font-size:9.3px;color:#111;line-height:9px;-webkit-text-stroke:.25px #222">2</div>
<div class="t" style="left:44px;top:622px;font-size:9.3px;color:#111;line-height:9px;-webkit-text-stroke:.25px #222">2</div>
<div class="t" style="left:44px;top:629px;font-size:9.3px;color:#111;line-height:9px;-webkit-text-stroke:.25px #222">4</div>
<div class="t" style="left:44px;top:664px;font-size:9.3px;color:#111;line-height:9px;-webkit-text-stroke:.25px #222">2</div>
<div class="t" style="left:44px;top:671px;font-size:9.3px;color:#111;line-height:9px;-webkit-text-stroke:.25px #222">6</div>
<div class="t" style="left:44px;top:706px;font-size:9.3px;color:#111;line-height:9px;-webkit-text-stroke:.25px #222">2</div>
<div class="t" style="left:44px;top:713px;font-size:9.3px;color:#111;line-height:9px;-webkit-text-stroke:.25px #222">8</div>
<div class="t" style="left:44px;top:748px;font-size:9.3px;color:#111;line-height:9px;-webkit-text-stroke:.25px #222">3</div>
<div class="t" style="left:44px;top:755px;font-size:9.3px;color:#111;line-height:9px;-webkit-text-stroke:.25px #222">0</div>
<div class="t" style="left:44px;top:790px;font-size:9.3px;color:#111;line-height:9px;-webkit-text-stroke:.25px #222">3</div>
<div class="t" style="left:44px;top:797px;font-size:9.3px;color:#111;line-height:9px;-webkit-text-stroke:.25px #222">2</div>
<div class="t" style="left:44px;top:832px;font-size:9.3px;color:#111;line-height:9px;-webkit-text-stroke:.25px #222">3</div>
<div class="t" style="left:44px;top:839px;font-size:9.3px;color:#111;line-height:9px;-webkit-text-stroke:.25px #222">4</div>
<div class="t" style="left:44px;top:874px;font-size:9.3px;color:#111;line-height:9px;-webkit-text-stroke:.25px #222">3</div>
<div class="t" style="left:44px;top:881px;font-size:9.3px;color:#111;line-height:9px;-webkit-text-stroke:.25px #222">6</div>
<div class="t" style="left:44px;top:916px;font-size:9.3px;color:#111;line-height:9px;-webkit-text-stroke:.25px #222">3</div>
<div class="t" style="left:44px;top:923px;font-size:9.3px;color:#111;line-height:9px;-webkit-text-stroke:.25px #222">8</div>
<div class="t" style="left:44px;top:958px;font-size:9.3px;color:#111;line-height:9px;-webkit-text-stroke:.25px #222">4</div>
<div class="t" style="left:44px;top:965px;font-size:9.3px;color:#111;line-height:9px;-webkit-text-stroke:.25px #222">0</div>
<div class="t" style="left:44px;top:1001px;font-size:9.3px;color:#111;line-height:9px;-webkit-text-stroke:.25px #222">4</div>
<div class="t" style="left:44px;top:1008px;font-size:9.3px;color:#111;line-height:9px;-webkit-text-stroke:.25px #222">2</div>
<div class="a" style="left:42px;top:1020px;width:1513px;height:16px;background:#d6d6d6;border-top:1px solid #8a8a8a"></div>
<div class="a" style="left:42px;top:1021px;width:46px;height:14px;background:#fff"></div>
<div class="t" style="left:49px;top:1023px;font-size:10px;color:#111;line-height:11px">17,81%</div>
<div class="a" style="left:93px;top:1021px;width:15px;height:14px;border:1px solid #a0a0a0;border-radius:7px;background:#cdcdcd"><div class="a" style="left:3px;top:3px;width:6px;height:6px;border:1px solid #8a8a8a;background:#dedede"></div></div>
<div class="a" style="left:111px;top:1021px;width:1px;height:15px;background:#aaa"></div>
<div class="t" style="left:147px;top:1023px;font-size:10px;color:#111;line-height:11px">Dok: 68,0 MB/93,9 MB</div>
<div class="a" style="left:283px;top:1021px;width:1px;height:15px;background:#aaa"></div>
<div class="a" style="left:287px;top:1022px;width:0;height:0;border-left:6px solid #111;border-top:5.5px solid transparent;border-bottom:5.5px solid transparent"></div>
<div class="a" style="left:296px;top:1021px;width:1px;height:15px;background:#aaa"></div>
<div class="a" style="left:297px;top:1021px;width:1258px;height:15px;background:#e9e9e9"></div>
<div class="a" style="left:302px;top:1024px;width:0;height:0;border-right:4px solid #a8a8a8;border-top:4px solid transparent;border-bottom:4px solid transparent"></div>
<div class="a" style="left:1545px;top:1024px;width:0;height:0;border-left:4px solid #a8a8a8;border-top:4px solid transparent;border-bottom:4px solid transparent"></div>
<div class="a" style="left:1555px;top:89px;width:15px;height:947px;background:#ececec"></div>
<div class="a" style="left:1559px;top:97px;width:0;height:0;border-bottom:4px solid #a8a8a8;border-left:4px solid transparent;border-right:4px solid transparent"></div>
<div class="a" style="left:1559px;top:1009px;width:0;height:0;border-top:4px solid #a8a8a8;border-left:4px solid transparent;border-right:4px solid transparent"></div>
<div class="a" style="left:0px;top:1036px;width:1920px;height:1px;background:#777"></div>
<div class="a" style="left:0px;top:1037px;width:1920px;height:3px;background:#d9d9d9"></div>
<div class="a" style="left:0px;top:36px;width:1px;height:1000px;background:#8e8e8e"></div>
<div class="a" style="left:2px;top:36px;width:2px;height:1000px;background:#eeeeee"></div>
<div class="a" style="left:4px;top:36px;width:1px;height:1000px;background:#6a6a6a"></div>
<div class="a" style="left:1916px;top:36px;width:4px;height:1000px;background:#e2e2e2"></div>
<div class="a" style="left:1915px;top:36px;width:1px;height:1000px;background:#8a8a8a"></div>
<div class="a" style="left:57px;top:105px;width:1498px;height:915px;background:#4e4e4e"></div>
<div class="a" style="left:489px;top:116px;width:634px;height:894px;background:#de6423"></div>
<div class="a" style="left:493px;top:120px;width:625px;height:885px;background:#c9ced2"></div>
<div class="a" style="left:499px;top:126px;width:614px;height:871px;background:#fff"></div>
<div class="a" style="left:1099px;top:120px;width:1px;height:877px;background:#9a9a9a"></div>
<div class="a" style="left:1110px;top:122px;width:1px;height:880px;background:#555"></div>
<div class="a" style="left:1111px;top:120px;width:7px;height:885px;background:linear-gradient(90deg,#e8eaec,#c4c9cd 45%,#c9ced2)"></div>
<div class="a" style="left:1095px;top:116px;width:7px;height:2px;background:#2a2a2a"></div>
<div class="a" style="left:1107px;top:119px;width:6px;height:2px;background:#2a2a2a"></div>
<div class="a" style="left:493px;top:985px;width:630px;height:1px;background:#8a8a8a"></div>
<div class="a" style="left:493px;top:997px;width:625px;height:8px;background:linear-gradient(#e4e6e8,#c2c7cb)"></div>
<div class="a" style="left:493px;top:996px;width:620px;height:1px;background:#999"></div>
<div class="a" style="left:493px;top:988px;width:1px;height:10px;background:#333"></div>
<div class="a" style="left:493px;top:120px;width:625px;height:885px;overflow:hidden">
<div class="a" style="left:27.7px;top:18.4px;width:160.8px;height:189.2px;background:#e5e9eb;transform:rotate(-2.49deg);box-shadow:0 0 2px rgba(120,120,120,.25)"></div>
<div class="a" style="left:38.0px;top:27.9px;width:137.8px;height:141.6px;transform:rotate(-2.49deg);overflow:hidden"><svg width="100%" height="100%" viewBox="0 0 100 100" preserveAspectRatio="none" style="display:block"><defs><linearGradient id="p0a" x1="0" y1="0" x2="0" y2="1"><stop offset="0" stop-color="#5c7e8c"/><stop offset=".22" stop-color="#84a0a0"/><stop offset=".42" stop-color="#cfcfba"/><stop offset=".52" stop-color="#d6b684"/><stop offset=".6" stop-color="#8a8c92"/><stop offset="1" stop-color="#6a6074"/></linearGradient>
<linearGradient id="p0b" x1="0" y1="1" x2="1" y2="0"><stop offset=".5" stop-color="#55557a" stop-opacity="0"/><stop offset="1" stop-color="#50507a" stop-opacity=".9"/></linearGradient>
<linearGradient id="p0c" x1="0" y1="0" x2="1" y2="1"><stop offset="0" stop-color="#aaa2b4"/><stop offset=".5" stop-color="#8a8298"/><stop offset="1" stop-color="#50465e"/></linearGradient>
<filter id="b0"><feGaussianBlur stdDeviation="3"/></filter><filter id="b0s"><feGaussianBlur stdDeviation="1.2"/></filter><filter id="b0t"><feGaussianBlur stdDeviation=".5"/></filter></defs><rect width="100" height="100" fill="url(#p0a)"/>
<rect width="100" height="100" fill="url(#p0b)"/>
<ellipse cx="30" cy="38" rx="42" ry="12" fill="#efe6cc" opacity=".75" filter="url(#b0)"/>
<ellipse cx="22" cy="51" rx="34" ry="6" fill="#f2b456" opacity=".9" filter="url(#b0)"/>
<path d="M0 57 Q30 53 60 54 T100 50 V74 H0Z" fill="#79838f" filter="url(#b0s)"/>
<path d="M20 58 Q50 54 100 54 V58 Q60 58 20 62Z" fill="#a8a8a6" opacity=".6" filter="url(#b0s)"/>
<path d="M0 72 Q30 70 55 76 T100 78 V100 H0Z" fill="url(#p0c)"/>
<path d="M0 66 Q14 66 28 74 Q60 82 100 76 V80 Q64 88 30 80 Q14 74 0 72Z" fill="#3a2e38" opacity=".85" filter="url(#b0t)"/>
<path d="M0 88 Q50 96 100 90 V100 H0Z" fill="#463a50" opacity=".8"/>
<g fill="#2b1f20"><circle cx="23" cy="24" r="4.600"/><path d="M14 32 Q23 27 32 32 L35 35 L40 40 L38 44 L32 42 L33 56 L37 74 L39 85 L44 90 L36 92.500 L31 76 L27.500 63 L26 77 L26 91 L18.500 93 L20 76 L17.500 58 L12 53 L10.500 38Z"/></g></svg></div>
<div class="a" style="left:227.1px;top:15.9px;width:158.8px;height:187.8px;background:#f0f2ed;transform:rotate(4.39deg);box-shadow:0 0 2px rgba(120,120,120,.25)"></div>
<div class="a" style="left:236.9px;top:24.0px;width:141.7px;height:140.6px;transform:rotate(4.39deg);overflow:hidden"><svg width="100%" height="100%" viewBox="0 0 100 100" preserveAspectRatio="none" style="display:block"><defs><radialGradient id="p1a" cx=".5" cy=".62" r=".8"><stop offset="0" stop-color="#f7f4e6"/><stop offset=".55" stop-color="#efead0"/><stop offset="1" stop-color="#c9c388"/></radialGradient>
<filter id="b1"><feGaussianBlur stdDeviation=".7"/></filter></defs><rect width="100" height="100" fill="url(#p1a)"/>
<g filter="url(#b1)"><path d="M40 44 L16 64 L10 64 L8 69 L13 73 L20 69 L48 55Z" fill="#80694e"/><path d="M52 50 L66 50 L73 77 L79 82 L73 86 L66 81 L60 64Z" fill="#80694e"/>
<g fill="#8c5a3c"><ellipse cx="53" cy="37" rx="12" ry="16" transform="rotate(28 53 37)"/><circle cx="56" cy="19" r="6"/>
<path d="M17 19 Q16 14 22 15.500 L49 23 L47 32 L22 24Z"/><path d="M60 28 L87 26 Q94 25 92 31 Q80 36 62 37Z"/></g></g>
<ellipse cx="50" cy="66" rx="3" ry="6" fill="#fff" opacity=".6" filter="url(#b1)"/></svg></div>
<div class="a" style="left:423.9px;top:16.1px;width:160.7px;height:189.7px;background:#eef0ec;transform:rotate(-2.00deg);box-shadow:0 0 2px rgba(120,120,120,.25)"></div>
<div class="a" style="left:432.3px;top:24.9px;width:143.0px;height:142.9px;transform:rotate(-2.00deg);overflow:hidden"><svg width="100%" height="100%" viewBox="0 0 100 100" preserveAspectRatio="none" style="display:block"><defs><linearGradient id="p2l" x1="0" y1="0" x2="1" y2="1"><stop offset="0" stop-color="#5a4a2e"/><stop offset="1" stop-color="#7a6440"/></linearGradient>
<linearGradient id="p2r" x1="0" y1="0" x2="1" y2="1"><stop offset="0" stop-color="#8a7650"/><stop offset="1" stop-color="#a08450"/></linearGradient>
<filter id="b2"><feGaussianBlur stdDeviation="1.2"/></filter><filter id="b2s"><feGaussianBlur stdDeviation=".6"/></filter></defs><rect width="100" height="100" fill="#73603c"/>
<g filter="url(#b2)"><path d="M30 -4 H70 L64 30 L60 52 H40 L37 30Z" fill="#adb2b6"/>
<path d="M-4 -4 H33 L38 30 L40 62 L-4 72Z" fill="url(#p2l)"/><path d="M68 -4 H104 V72 L60 62 L63 30Z" fill="url(#p2r)"/>
<rect x="36" y="36" width="36" height="16" fill="#d2b26a" opacity=".85"/>
<rect x="74" y="40" width="22" height="30" fill="#c8a460" opacity=".55"/>
<rect x="5" y="50" width="20" height="36" fill="#3c3468" opacity=".92"/>
<path d="M-4 72 L40 62 H62 L104 74 V104 H-4Z" fill="#7c6a46"/><path d="M26 76 L44 64 H58 L68 78 L62 104 H28Z" fill="#a8925c" opacity=".7"/>
<rect x="-4" y="88" width="108" height="16" fill="#55452c" opacity=".75"/></g>
<rect x="20" y="33" width="60" height="2.500" fill="#f2e2a0" opacity=".95" filter="url(#b2s)"/>
<g fill="#2a2218" filter="url(#b2s)"><rect x="68" y="62" width="5" height="20"/><rect x="90" y="64" width="7" height="20"/><rect x="44" y="64" width="12" height="9" opacity=".7"/><rect x="32" y="66" width="4" height="10" opacity=".7"/></g></svg></div>
<div class="a" style="left:31.1px;top:234.2px;width:159.5px;height:187.5px;background:#eceeee;transform:rotate(2.39deg);box-shadow:0 0 2px rgba(120,120,120,.25)"></div>
<div class="a" style="left:42.0px;top:243.2px;width:137.5px;height:140.5px;transform:rotate(2.39deg);overflow:hidden"><svg width="100%" height="100%" viewBox="0 0 100 100" preserveAspectRatio="none" style="display:block"><defs><linearGradient id="p3a" x1="0" y1="0" x2=".55" y2="1"><stop offset="0" stop-color="#86b626"/><stop offset=".3" stop-color="#b4d068"/><stop offset=".5" stop-color="#dfe8c4"/><stop offset=".7" stop-color="#ecece6"/></linearGradient>
<linearGradient id="p3h" x1="0" y1="0" x2="1" y2="0"><stop offset="0" stop-color="#a07838"/><stop offset=".4" stop-color="#8a5a2e"/><stop offset="1" stop-color="#5c3c22"/></linearGradient>
<radialGradient id="v3" r=".8"><stop offset=".75" stop-color="#fff" stop-opacity="0"/><stop offset="1" stop-color="#fff" stop-opacity=".35"/></radialGradient>
<filter id="b3"><feGaussianBlur stdDeviation="2.500"/></filter><filter id="b3s"><feGaussianBlur stdDeviation=".6"/></filter></defs><rect width="100" height="100" fill="url(#p3a)"/>
<rect x="-5" y="-4" width="62" height="13" fill="#386614" opacity=".9" filter="url(#b3)"/>
<rect x="84" y="-4" width="22" height="14" fill="#3c6a1a" opacity=".9" filter="url(#b3)"/>
<path d="M40 56 L104 44 V104 H30Z" fill="#e6e7e3" filter="url(#b3)"/>
<g filter="url(#b3s)"><path d="M72 14 L104 12 V84 L86 78 L76 60 L72 40Z" fill="#efe2e4"/>
<path d="M78 40 L82 38 L86 70 L82 72Z M90 30 L93 30 L96 66 L93 66Z" fill="#e0b8c8" opacity=".6"/>
<path d="M82 62 L98 66 V76 L85 74Z" fill="#b8446e"/>
<path d="M50 26 Q64 26 73 19 L78 36 Q68 42 58 38 Q54 34 50 26Z" fill="#f0d6c8"/>
<path d="M37 15 Q41 1 62 2 Q84 1 104 11 V19 Q86 10 76 17 Q66 29 50 30 Q38 28 37 15Z" fill="url(#p3h)"/>
<path d="M58 76 L100 79 L98 87 L60 82Z" fill="#ecc6ac"/>
<path d="M-2 68 L12 70 L26 72 L31 62 L26 52 L33 56 L36 51 L39 56 L43 50 L46 57 L50 62 L52 74 L47 80 L42 76 L44 104 H-2Z" fill="#46261d"/>
<path d="M36 51 L38 50 L39 56Z M43 50 L45 49 L46 57Z" fill="#d8cab4"/>
<path d="M-2 62 L8 60 L11 70 L5 80 L-2 78Z" fill="#e6dace" opacity=".9"/><path d="M0 60 L7 61 L6 66 L0 66Z" fill="#5a3a2c"/></g>
<rect width="100" height="100" fill="url(#v3)"/></svg></div>
<div class="a" style="left:231.4px;top:234.6px;width:161.4px;height:190.0px;background:#f0f0ec;transform:rotate(2.72deg);box-shadow:0 0 2px rgba(120,120,120,.25)"></div>
<div class="a" style="left:240.1px;top:242.3px;width:144.9px;height:143.8px;transform:rotate(2.72deg);overflow:hidden"><svg width="100%" height="100%" viewBox="0 0 100 100" preserveAspectRatio="none" style="display:block"><defs><linearGradient id="p4a" x1="0" y1="0" x2="0" y2="1"><stop offset="0" stop-color="#e2a828"/><stop offset=".2" stop-color="#f0c840"/><stop offset=".4" stop-color="#f0b418"/></linearGradient>
<linearGradient id="p4b" x1="0" y1="0" x2="0" y2="1"><stop offset="0" stop-color="#b07416"/><stop offset=".35" stop-color="#744410"/><stop offset="1" stop-color="#2a1406"/></linearGradient>
<radialGradient id="v4" r=".8"><stop offset=".7" stop-color="#401800" stop-opacity="0"/><stop offset="1" stop-color="#401800" stop-opacity=".35"/></radialGradient>
<filter id="b4"><feGaussianBlur stdDeviation="3.500"/></filter><filter id="b4s"><feGaussianBlur stdDeviation=".5"/></filter>
<filter id="t4" x="0" y="0" width="1" height="1"><feTurbulence type="fractalNoise" baseFrequency=".5 .12" numOctaves="2" seed="8"/><feColorMatrix values="0 0 0 0 .16  0 0 0 0 .08  0 0 0 0 .02  2.2 0 0 0 -1"/><feComposite in2="SourceGraphic" operator="in"/></filter></defs><rect width="100" height="100" fill="url(#p4a)"/>
<ellipse cx="54" cy="18" rx="26" ry="18" fill="#fbf2b4" opacity=".85" filter="url(#b4)"/>
<path d="M64 5 Q80 0 102 3 V17 Q82 13 64 5Z" fill="#cc8418" opacity=".85" filter="url(#b4s)"/>
<rect y="39" width="100" height="61" fill="url(#p4b)"/>
<rect y="40" width="100" height="60" fill="#fff" filter="url(#t4)" opacity=".8"/>
<rect y="36" width="100" height="5" fill="#5a3208" opacity=".75" filter="url(#b4s)"/>
<g filter="url(#b4s)"><g fill="#f2c842"><circle cx="17" cy="62" r="10"/><circle cx="76" cy="70" r="11.500"/><circle cx="60" cy="56" r="7.500" opacity=".85"/><ellipse cx="35" cy="70" rx="4" ry="2.500" opacity=".9"/></g>
<g fill="#f8e070" opacity=".8"><circle cx="17" cy="62" r="5"/><circle cx="76" cy="70" r="6"/></g>
<g fill="#eaa820" opacity=".75"><circle cx="8" cy="45" r="3"/><circle cx="22" cy="48" r="3.500"/><circle cx="38" cy="46" r="3"/><circle cx="68" cy="45" r="2.500"/><circle cx="90" cy="47" r="3"/><circle cx="86" cy="56" r="3"/><circle cx="45" cy="52" r="2.500"/><circle cx="30" cy="44" r="2"/><circle cx="96" cy="60" r="2.500"/></g>
<g stroke="#8a4c10" stroke-width="1.300" fill="none" opacity=".8"><path d="M17 72V100M76 82L74 100M60 64V100M35 72L37 100M88 60V100M26 52V100"/></g>
<path d="M48.500 26 L52 26 L50 100 L46.500 100Z" fill="#c47a1a"/><ellipse cx="50" cy="21" rx="4" ry="5" fill="#b44c18"/>
<path d="M41 12 Q36 22 44 30 M59 12 Q64 22 56 30" fill="none" stroke="#d89418" stroke-width="3" stroke-dasharray="1.400 1" opacity=".9"/>
<circle cx="82" cy="35" r="2" fill="#c87818"/></g>
<rect width="100" height="100" fill="url(#v4)"/></svg></div>
<div class="a" style="left:430.3px;top:229.8px;width:169.6px;height:200.0px;background:#e5e9ec;transform:rotate(-4.60deg);box-shadow:0 0 2px rgba(120,120,120,.25)"></div>
<div class="a" style="left:440.2px;top:240.5px;width:146.0px;height:149.7px;transform:rotate(-4.60deg);overflow:hidden"><svg width="100%" height="100%" viewBox="0 0 100 100" preserveAspectRatio="none" style="display:block"><defs><linearGradient id="p5a" x1="0" y1="0" x2="1" y2="1"><stop offset="0" stop-color="#48525e"/><stop offset=".5" stop-color="#46505a"/><stop offset="1" stop-color="#3c5048"/></linearGradient>
<linearGradient id="p5s" x1="0" y1="0" x2="1" y2="1"><stop offset="0" stop-color="#9cbc58"/><stop offset=".5" stop-color="#86a63c"/><stop offset="1" stop-color="#a2bc40"/></linearGradient>
<radialGradient id="p5l" cx=".4" cy=".3" r=".7"><stop offset="0" stop-color="#d8909c"/><stop offset=".25" stop-color="#b43444"/><stop offset="1" stop-color="#8e2434"/></radialGradient>
<filter id="b5"><feGaussianBlur stdDeviation="5"/></filter><filter id="b5s"><feGaussianBlur stdDeviation="1"/></filter><filter id="b5t"><feGaussianBlur stdDeviation=".45"/></filter></defs><rect width="100" height="100" fill="url(#p5a)"/>
<path d="M45 -5 H105 V50 Q90 14 45 -5Z" fill="#629670" opacity=".9" filter="url(#b5)"/>
<path d="M92 40 H105 V105 H88Z" fill="#3a5a48" opacity=".8" filter="url(#b5)"/>
<g filter="url(#b5s)"><path d="M-3 34 Q16 32 36 46 Q56 62 86 74 L90 104 H52 Q30 72 -3 62Z" fill="url(#p5s)"/>
<path d="M-3 37 Q16 37 32 47 L44 60 Q20 46 -3 48Z" fill="#c0d88a" opacity=".8"/>
<path d="M-3 52 Q20 54 44 74 L56 96 Q30 66 -3 58Z" fill="#5e7c30" opacity=".7"/>
<path d="M50 72 Q70 66 92 78 L88 104 H56Z" fill="#a6c044"/>
<path d="M-3 68 Q28 78 46 104 H-3Z" fill="#3c4850"/></g>
<g filter="url(#b5t)"><ellipse cx="56" cy="52" rx="15" ry="11" fill="#8c2a38" transform="rotate(-22 56 52)"/><ellipse cx="79" cy="56" rx="13" ry="16" fill="url(#p5l)" transform="rotate(-8 79 56)"/>
<ellipse cx="44" cy="47" rx="6" ry="4.500" fill="#16161a" transform="rotate(-30 44 47)"/><ellipse cx="71" cy="40.500" rx="8" ry="4" fill="#16161a" transform="rotate(-8 71 40.500)"/><path d="M44 58 Q56 68 70 70" stroke="#16161a" stroke-width="2.500" fill="none" opacity=".8"/>
<path d="M66 42 Q64 56 72 68" stroke="#2a1218" stroke-width="2.500" fill="none"/>
<g fill="#e8ece8"><circle cx="41" cy="46" r="1.300"/><circle cx="65" cy="39.500" r="1.400"/><circle cx="76" cy="38.500" r="1.200"/></g>
<g fill="#1c1014"><circle cx="52" cy="52" r="2"/><circle cx="73" cy="50" r="2.200"/><circle cx="86" cy="52" r="2"/><circle cx="82" cy="64" r="2.200"/></g></g>
<path d="M2 2 Q4 22 10 32 M24 2 Q24 20 16 32" stroke="#8ea4b4" stroke-width="2" fill="none" opacity=".55" filter="url(#b5s)"/></svg></div>
<div class="a" style="left:22.9px;top:440.4px;width:166.1px;height:194.9px;background:#eff0eb;transform:rotate(-4.89deg);box-shadow:0 0 2px rgba(120,120,120,.25)"></div>
<div class="a" style="left:30.8px;top:449.1px;width:148.2px;height:147.7px;transform:rotate(-4.89deg);overflow:hidden"><svg width="100%" height="100%" viewBox="0 0 100 100" preserveAspectRatio="none" style="display:block"><defs><radialGradient id="p6a"><stop offset="0" stop-color="#8e887a"/><stop offset=".7" stop-color="#7b7569"/><stop offset="1" stop-color="#625e54"/></radialGradient>
<radialGradient id="v6" r=".75"><stop offset=".6" stop-color="#000" stop-opacity="0"/><stop offset="1" stop-color="#000" stop-opacity=".35"/></radialGradient>
<filter id="b6"><feGaussianBlur stdDeviation="1.200"/></filter><filter id="b6s"><feGaussianBlur stdDeviation=".5"/></filter>
<filter id="t6" x="0" y="0" width="1" height="1"><feTurbulence type="fractalNoise" baseFrequency=".35" numOctaves="2" seed="3"/><feColorMatrix values="0 0 0 0 .25  0 0 0 0 .23  0 0 0 0 .2  1.6 0 0 0 -.65"/><feComposite in2="SourceGraphic" operator="in"/></filter></defs><rect width="100" height="100" fill="#3a3630"/>
<rect y="0" width="100" height="14" fill="#2c2824"/>
<g filter="url(#b6)"><path d="M56 10 H84 Q99 28 97 56 Q95 78 84 86 H56Z" fill="#777164"/>
<ellipse cx="46" cy="49" rx="31" ry="38" fill="url(#p6a)"/>
<rect x="-2" y="30" width="17" height="50" fill="#59554b" opacity=".7"/>
<path d="M4 80 Q50 72 102 80 V92 H2Z" fill="#5e5a50" opacity=".85"/><rect x="-2" y="89" width="104" height="14" fill="#2a2622"/></g>
<ellipse cx="46" cy="49" rx="31" ry="38" fill="#fff" filter="url(#t6)" opacity=".55"/>
<g filter="url(#b6s)"><g fill="#25211f"><path d="M40 60 Q43.500 55 47 60 L50 70 L48 80 L39 84 L37 74Z"/><path d="M57 58 Q61.500 53 66 59 L70 72 L66 82 L56 80 L54 68Z"/></g>
<path d="M38 78 L48 78 L49 88 L38 88Z M54 76 L64 80 L58 88 L51 86Z" fill="#77736a"/></g>
<rect width="100" height="100" fill="url(#v6)"/></svg></div>
<div class="a" style="left:235.8px;top:446.1px;width:162.8px;height:192.5px;background:#f0f1ee;transform:rotate(5.16deg);box-shadow:0 0 2px rgba(120,120,120,.25)"></div>
<div class="a" style="left:246.1px;top:453.8px;width:145.2px;height:145.1px;transform:rotate(5.16deg);overflow:hidden"><svg width="100%" height="100%" viewBox="0 0 100 100" preserveAspectRatio="none" style="display:block"><defs><linearGradient id="p7a" x1="0" y1="0" x2="0" y2="1"><stop offset="0" stop-color="#a6a69e"/><stop offset=".25" stop-color="#cacac2"/><stop offset=".5" stop-color="#b6b6ae"/><stop offset=".72" stop-color="#85857e"/><stop offset="1" stop-color="#4a4a44"/></linearGradient>
<radialGradient id="v7" r=".75"><stop offset=".65" stop-color="#000" stop-opacity="0"/><stop offset="1" stop-color="#000" stop-opacity=".3"/></radialGradient>
<filter id="b7"><feGaussianBlur stdDeviation="3.500"/></filter><filter id="b7s"><feGaussianBlur stdDeviation=".5"/></filter>
<filter id="t7" x="0" y="0" width="1" height="1"><feTurbulence type="fractalNoise" baseFrequency=".9 .08" numOctaves="2" seed="5"/><feColorMatrix values="0 0 0 0 .2  0 0 0 0 .2  0 0 0 0 .18  1.8 0 0 0 -.8"/><feComposite in2="SourceGraphic" operator="in"/></filter></defs><rect width="100" height="100" fill="url(#p7a)"/>
<path d="M-4 -4 H30 Q24 10 8 12 L-4 15Z" fill="#55554f" opacity=".85" filter="url(#b7)"/>
<path d="M60 -4 H104 V8 Q80 4 60 -4Z" fill="#8a8a84" opacity=".6" filter="url(#b7)"/>
<path d="M-4 66 Q20 54 50 62 T104 56 V104 H-4Z" fill="#5c5c55" opacity=".9" filter="url(#b7)"/>
<path d="M-4 84 Q50 74 104 82 V104 H-4Z" fill="#3c3c36" opacity=".8" filter="url(#b7)"/>
<rect y="30" width="100" height="70" fill="#fff" filter="url(#t7)" opacity=".5"/>
<g fill="#ecece4" filter="url(#b7s)"><ellipse cx="35" cy="80" rx="10.500" ry="7.500"/><ellipse cx="69" cy="91" rx="9.500" ry="7"/><ellipse cx="60" cy="76" rx="5.500" ry="4"/><ellipse cx="76" cy="81" rx="4" ry="3"/><ellipse cx="24" cy="70" rx="5" ry="2.500"/><ellipse cx="47" cy="98" rx="4" ry="3"/><ellipse cx="46" cy="68" rx="3" ry="2"/></g>
<g fill="#66665e"><circle cx="35" cy="80" r="1.500"/><circle cx="69" cy="91" r="1.500"/></g>
<rect width="100" height="100" fill="url(#v7)"/></svg></div>
<div class="a" style="left:433.1px;top:455.6px;width:166.2px;height:196.8px;background:#eaedef;transform:rotate(0.76deg);box-shadow:0 0 2px rgba(120,120,120,.25)"></div>
<div class="a" style="left:444.1px;top:465.9px;width:143.3px;height:147.4px;transform:rotate(0.76deg);overflow:hidden"><svg width="100%" height="100%" viewBox="0 0 100 100" preserveAspectRatio="none" style="display:block"><defs><radialGradient id="p8a" cx=".5" cy=".5" r=".7"><stop offset="0" stop-color="#f0c892"/><stop offset=".6" stop-color="#ecc07c"/><stop offset="1" stop-color="#dc9c44"/></radialGradient>
<pattern id="dots" width="6" height="6" patternUnits="userSpaceOnUse" patternTransform="rotate(30)"><rect width="6" height="6" fill="#8c3c1c"/><circle cx="3" cy="3" r="1.900" fill="#f4ecd8"/></pattern></defs><rect width="100" height="100" fill="url(#p8a)"/>
<path d="M56 0 H100 V30 Q80 20 56 0Z" fill="#e2a050" opacity=".8"/>
<path d="M0 60 L30 74 L22 100 H0Z" fill="#e0b068" opacity=".9"/>
<path d="M12 0 H44 L20 22Z" fill="url(#dots)"/><path d="M0 28 L16 26 L12 52 L0 60Z" fill="url(#dots)"/>
<path d="M100 50 L100 92 L84 100 H56 Q84 82 100 50Z" fill="url(#dots)"/>
<circle cx="70" cy="54" r="2.500" fill="#d8dcd8"/>
<rect width="100" height="3" fill="#d8862c" opacity=".7"/></svg></div>
<div class="a" style="left:26.8px;top:662.2px;width:171.4px;height:203.8px;background:#eff0ea;transform:rotate(1.37deg);box-shadow:0 0 2px rgba(120,120,120,.25)"></div>
<div class="a" style="left:36.5px;top:671.0px;width:153.7px;height:152.9px;transform:rotate(1.37deg);overflow:hidden"><svg width="100%" height="100%" viewBox="0 0 100 100" preserveAspectRatio="none" style="display:block"><defs><radialGradient id="p9a" cx=".62" cy=".55" r=".72"><stop offset="0" stop-color="#fcf5e6"/><stop offset=".5" stop-color="#efdcc0"/><stop offset="1" stop-color="#d4a884"/></radialGradient>
<filter id="b9"><feGaussianBlur stdDeviation="3"/></filter><filter id="b9s"><feGaussianBlur stdDeviation=".8"/></filter>
<filter id="t9" x="0" y="0" width="1" height="1"><feTurbulence type="fractalNoise" baseFrequency=".45" numOctaves="2" seed="11"/><feColorMatrix values="0 0 0 0 .62  0 0 0 0 .34  0 0 0 0 .2  2 0 0 0 -.95"/><feComposite in2="SourceGraphic" operator="in"/></filter></defs><rect width="100" height="100" fill="url(#p9a)"/>
<path d="M-3 -3 H46 L36 20 L30 50 L24 80 L-3 82Z" fill="#bc7c54" opacity=".62" filter="url(#b9)"/>
<path d="M78 -3 H103 V86 L84 88 Q94 50 82 16Z" fill="#ac5a38" opacity=".9" filter="url(#b9s)"/>
<path d="M36 -3 H82 Q72 12 60 14 Q48 12 36 -3Z" fill="#c48c68" opacity=".6" filter="url(#b9)"/>
<rect width="100" height="100" fill="#fff" filter="url(#t9)" opacity=".75"/>
<g stroke="#96502f" fill="none" opacity=".85"><path d="M7 0 L5 74" stroke-width="2.400"/><path d="M17 0 L13 76" stroke-width="1.600"/><path d="M37 0 Q30 40 22 80" stroke-width="2.400"/><path d="M27 8 L31 72" stroke-width="1.300"/><path d="M0 30 L10 28 M12 20 L24 14 M2 56 L28 56" stroke-width="1"/></g>
<path d="M61 30 L66 30 L64 62 L58.500 64Z" fill="#9a5434"/>
<path d="M-3 74 Q50 68 103 86 V103 H-3Z" fill="#e2c8a6" opacity=".75" filter="url(#b9s)"/>
<g fill="#5e3e2a"><path d="M44.500 46 Q47 41 50 46 L51 56 L44 56Z"/><path d="M39 58 Q46 53 54 58 L55 70 L53 82 L51 82 L51 70 L44 70 L43 84 L41 84 L41 70Z"/></g>
<circle cx="47" cy="42" r="1.600" fill="#f0e6d6"/></svg></div>
<div class="a" style="left:242.9px;top:666.1px;width:163.8px;height:194.9px;background:#e4e8eb;transform:rotate(-2.85deg);box-shadow:0 0 2px rgba(120,120,120,.25)"></div>
<div class="a" style="left:252.8px;top:676.6px;width:141.4px;height:144.6px;transform:rotate(-2.85deg);overflow:hidden"><svg width="100%" height="100%" viewBox="0 0 100 100" preserveAspectRatio="none" style="display:block"><defs><linearGradient id="p10a" x1="0" y1="0" x2="0" y2="1"><stop offset="0" stop-color="#a08a62"/><stop offset=".3" stop-color="#bca67e"/><stop offset=".6" stop-color="#b8a27a"/></linearGradient>
<linearGradient id="p10b" x1="0" y1="0" x2="0" y2="1"><stop offset="0" stop-color="#4e4a34"/><stop offset="1" stop-color="#362c20"/></linearGradient></defs><rect width="100" height="100" fill="url(#p10a)"/>
<path d="M0 56 Q20 50 40 52 L36 60 L0 70Z" fill="#cdbf9c" opacity=".6"/>
<path d="M0 74 Q30 60 46 52 Q70 46 100 48 V100 H0Z" fill="url(#p10b)"/>
<g fill="#54462e"><path d="M54 28 Q57 24 60 28 L62 36 L62 52 L54 52 L53 36Z"/><path d="M64 30 Q67 26 70 30 L74 38 L72 44 L71 52 L63 52 L63 38Z"/></g></svg></div>
<div class="a" style="left:439.9px;top:674.5px;width:163.5px;height:191.2px;background:#edeeea;transform:rotate(3.77deg);box-shadow:0 0 2px rgba(120,120,120,.25)"></div>
<div class="a" style="left:449.6px;top:681.6px;width:146.2px;height:146.2px;transform:rotate(3.77deg);overflow:hidden"><svg width="100%" height="100%" viewBox="0 0 100 100" preserveAspectRatio="none" style="display:block"><defs><linearGradient id="p11a" x1="0" y1="0" x2="0" y2="1"><stop offset="0" stop-color="#9068ac"/><stop offset=".25" stop-color="#cfa0cc"/><stop offset=".42" stop-color="#eeaa8c"/><stop offset=".515" stop-color="#ee9a5c"/><stop offset=".53" stop-color="#6e4064"/><stop offset=".62" stop-color="#90587c"/><stop offset=".68" stop-color="#6c3c60"/><stop offset=".735" stop-color="#c88498"/><stop offset=".79" stop-color="#d08888"/><stop offset=".81" stop-color="#54222c"/><stop offset="1" stop-color="#2c1016"/></linearGradient>
<filter id="b11"><feGaussianBlur stdDeviation="3.500"/></filter><filter id="b11s"><feGaussianBlur stdDeviation="1.500"/></filter><filter id="b11t"><feGaussianBlur stdDeviation=".35"/></filter></defs><rect width="100" height="100" fill="url(#p11a)"/>
<ellipse cx="62" cy="47" rx="22" ry="13" fill="#fff0b0" filter="url(#b11)"/>
<ellipse cx="62" cy="48" rx="9" ry="6" fill="#fffbe8" filter="url(#b11s)"/>
<ellipse cx="61" cy="76" rx="6" ry="3.500" fill="#ffd070" opacity=".95" filter="url(#b11s)"/>
<text x="14" y="26" font-size="24" fill="none" stroke="#f8e6f4" stroke-width=".6" opacity=".75" font-family="Liberation Sans, sans-serif" transform="rotate(3 14 26)" textLength="50" lengthAdjust="spacingAndGlyphs">2012</text>
<g fill="#120810" filter="url(#b11t)"><path d="M4 31 L6.500 30 L11 41 Q14 35 18 40 L24 28 L27 29 L21 45 L20 60 L19 70 L18 82 L15 82 L15 68 L12.500 80 L9 80 L11 62 L10 48Z"/>
<path d="M34 31 L36.500 30 L39 41 Q42 36 45 41 L47 31 L49.500 32 L48 47 L48 56 L53 55 L55 58 L50 68 L40 69 L38 60 L38 48Z"/>
<path d="M69 35 L71 34 L78 46 Q82 39 86 44 L95 37 L97 39.500 L88 51 L87 62 L88 74 L87 87 L84.500 87 L82 70 L75 83 L71 85 L70 83 L77 66 L77 52Z"/></g></svg></div>
</div>
<div class="t" style="left:0px;top:0px;left:1083.5px;top:559px;font-size:6px;color:#1a1a1a;transform:rotate(-90deg);transform-origin:center;width:24px;text-align:center">424 mm</div>
<div class="t" style="left:0px;top:0px;left:1093.5px;top:559px;font-size:6px;color:#1a1a1a;transform:rotate(-90deg);transform-origin:center;width:24px;text-align:center">420 mm</div>
<div class="t" style="left:793px;top:988px;font-size:5.500px;color:#222;font-weight:bold;font-style:italic">297 mm</div>
<div class="t" style="left:793px;top:980px;font-size:5.500px;color:#aaa;font-weight:bold;font-style:italic">301 mm</div>
<div class="a" style="left:926px;top:788px;width:178px;height:206px;border:1px solid #111"></div>
<div class="a" style="left:923px;top:785px;width:7px;height:7px;border:1px solid #111;background:rgba(255,255,255,.85)"></div>
<div class="a" style="left:1012px;top:785px;width:7px;height:7px;border:1px solid #111;background:rgba(255,255,255,.85)"></div>
<div class="a" style="left:1100px;top:785px;width:7px;height:7px;border:1px solid #111;background:rgba(255,255,255,.85)"></div>
<div class="a" style="left:923px;top:887px;width:7px;height:7px;border:1px solid #111;background:rgba(255,255,255,.85)"></div>
<div class="a" style="left:1100px;top:887px;width:7px;height:7px;border:1px solid #111;background:rgba(255,255,255,.85)"></div>
<div class="a" style="left:923px;top:990px;width:7px;height:7px;border:1px solid #111;background:rgba(255,255,255,.85)"></div>
<div class="a" style="left:1012px;top:990px;width:7px;height:7px;border:1px solid #111;background:rgba(255,255,255,.85)"></div>
<div class="a" style="left:1100px;top:990px;width:7px;height:7px;border:1px solid #111;background:rgba(255,255,255,.85)"></div>
<svg class="a" style="left:1008px;top:884px" width="13" height="13" viewBox="0 0 13 13"><circle cx="6.5" cy="6.5" r="2.500" fill="none" stroke="#ddd" stroke-width="1"/><path d="M6.500 0V13M0 6.500H13" stroke="#eee" stroke-width="1"/><path d="M6.500 4V9M4 6.500H9" stroke="#222" stroke-width="1"/></svg>
<div class="a" style="left:5px;top:70px;width:37px;height:966px;background:#686868"></div>
<div class="a" style="left:5px;top:70px;width:37px;height:12px;background:linear-gradient(#3a3a3a,#545454);border-bottom:1px solid #222"></div>
<svg class="a" style="left:8px;top:73px" width="8" height="6" viewBox="0 0 8 6"><path d="M0 0L3.500 3L0 6ZM4 0L7.500 3L4 6Z" fill="#d8d8d8"/></svg>
<div class="a" style="left:5px;top:82px;width:37px;height:612px;background:#d6d6d6;border-right:1px solid #9a9a9a"></div>
<div class="a" style="left:9px;top:86px;width:29px;height:2px;background:repeating-linear-gradient(90deg,#aaa 0 1px,transparent 1px 2px)"></div>
<div class="a" style="left:5px;top:91px;width:36px;height:31px;border:5px solid #ee1111;border-radius:2px;background:#c8c8c8"></div>
<svg class="a" style="left:14px;top:100px" width="18.400000000000002" height="12.88" viewBox="0 0 20 14"><path d="M1 0.5 L1 10.5 L8.5 5.5 Z" fill="#3a3a3a"/><path d="M13.5 4.5V13.5M9 9H18M13.5 3.5l-1.8 2h3.6zM13.5 14.5l-1.8 -2h3.6zM8 9l2 -1.8v3.6zM19 9l-2 -1.8v3.6z" stroke="#3a3a3a" stroke-width=".9" fill="#3a3a3a"/></svg>
<div class="a" style="left:8px;top:233px;width:31px;height:1px;background:#a2a2a2"></div>
<div class="a" style="left:8px;top:234px;width:31px;height:1px;background:#ededed"></div>
<div class="a" style="left:8px;top:422px;width:31px;height:1px;background:#a2a2a2"></div>
<div class="a" style="left:8px;top:423px;width:31px;height:1px;background:#ededed"></div>
<div class="a" style="left:8px;top:519px;width:31px;height:1px;background:#a2a2a2"></div>
<div class="a" style="left:8px;top:520px;width:31px;height:1px;background:#ededed"></div>
<svg class="a" style="left:13px;top:119px" width="22" height="20.3" viewBox="0 0 26 24"><rect x="3.5" y="3.5" width="15" height="14" fill="none" stroke="#3a3a3a" stroke-width="1.3" stroke-dasharray="3 2"/><path d="M24.5 18.5V23.5H19.5Z" fill="#111"/></svg>
<svg class="a" style="left:13px;top:142px" width="22" height="20.3" viewBox="0 0 26 24"><path d="M3 4 L10 8 L19 2 L17 15 L8 13 L6 19 L4 17 L6 12 Z" fill="none" stroke="#3a3a3a" stroke-width="1.600"/><path d="M24.5 18.5V23.5H19.5Z" fill="#111"/></svg>
<svg class="a" style="left:13px;top:165px" width="22" height="20.3" viewBox="0 0 26 24"><circle cx="8" cy="7" r="4.500" fill="none" stroke="#3a3a3a" stroke-width="1.200" stroke-dasharray="1.500 1.500"/><path d="M10 10L20 20" stroke="#3a3a3a" stroke-width="3"/><path d="M24.5 18.5V23.5H19.5Z" fill="#111"/></svg>
<svg class="a" style="left:13px;top:188px" width="22" height="20.3" viewBox="0 0 26 24"><path d="M6 1V16H21M1 6H16V21" fill="none" stroke="#3a3a3a" stroke-width="2.200"/><path d="M5 17L17 5" stroke="#3a3a3a" stroke-width="1.200"/><path d="M24.5 18.5V23.5H19.5Z" fill="#111"/></svg>
<svg class="a" style="left:13px;top:211px" width="22" height="20.3" viewBox="0 0 26 24"><path d="M3 20L5 15L13 7L16 10L8 18Z" fill="#c8c8c8" stroke="#3a3a3a" stroke-width="1.300"/><path d="M12 5L18 11L20 9L19 7L21 4L19 2L16 4L14 3Z" fill="#3a3a3a"/><path d="M24.5 18.5V23.5H19.5Z" fill="#111"/></svg>
<svg class="a" style="left:13px;top:237px" width="22" height="20.3" viewBox="0 0 26 24"><rect x="1" y="7" width="20" height="8" rx="4" fill="#8a8a8a" stroke="#3a3a3a" stroke-width="1.200" transform="rotate(-40 11 11)"/><rect x="8" y="8" width="6" height="6" fill="#b8b8b8" transform="rotate(-40 11 11)"/><path d="M24.5 18.5V23.5H19.5Z" fill="#111"/></svg>
<svg class="a" style="left:13px;top:260px" width="22" height="20.3" viewBox="0 0 26 24"><path d="M3 19Q2 13 8 12L11 15Q9 20 3 19Z" fill="#3a3a3a"/><path d="M9 11L20 2L22 4L12 14Z" fill="#6a6a6a" stroke="#3a3a3a" stroke-width="1"/><path d="M24.5 18.5V23.5H19.5Z" fill="#111"/></svg>
<svg class="a" style="left:13px;top:283px" width="22" height="20.3" viewBox="0 0 26 24"><path d="M4 19H19V15H4Z M7 15V12H16V15 M9 12Q7 8 10 5Q12.500 3 14 5Q16 8 14 12Z" fill="#3a3a3a"/><path d="M1 3l3 3m0-3l-3 3" stroke="#3a3a3a" stroke-width="1.200"/><path d="M24.5 18.5V23.5H19.5Z" fill="#111"/></svg>
<svg class="a" style="left:13px;top:306px" width="22" height="20.3" viewBox="0 0 26 24"><path d="M3 18Q3 12 9 11L12 14Q10 19 3 18Z" fill="#3a3a3a"/><path d="M10 10L20 3L21 5L12 13Z" fill="#6a6a6a" stroke="#3a3a3a" stroke-width="1"/><path d="M3 8Q6 2 12 4L11 2M12 4L10 6" fill="none" stroke="#3a3a3a" stroke-width="1.300"/><path d="M24.5 18.5V23.5H19.5Z" fill="#111"/></svg>
<svg class="a" style="left:13px;top:329px" width="22" height="20.3" viewBox="0 0 26 24"><path d="M2 15L12 6L21 9L11 18Z" fill="#707070" stroke="#3a3a3a" stroke-width="1.200"/><path d="M2 15V18L11 21V18" fill="#b0b0b0" stroke="#3a3a3a" stroke-width="1"/><path d="M11 21L21 12V9" fill="none" stroke="#3a3a3a" stroke-width="1"/><path d="M24.5 18.5V23.5H19.5Z" fill="#111"/></svg>
<svg class="a" style="left:13px;top:352px" width="22" height="20.3" viewBox="0 0 26 24"><path d="M5 10L12 4L19 10L17 19Q12 21 7 19Z" fill="#8a8a8a" stroke="#3a3a3a" stroke-width="1.300"/><path d="M8 9Q4 2 10 3" fill="none" stroke="#3a3a3a" stroke-width="1.300"/><path d="M17 12Q22 14 20 19Q18 16 17 12Z" fill="#3a3a3a"/><path d="M24.5 18.5V23.5H19.5Z" fill="#111"/></svg>
<svg class="a" style="left:13px;top:375px" width="22" height="20.3" viewBox="0 0 26 24"><path d="M11 3Q17 11 17 14.500A6 6 0 0 1 5 14.500Q5 11 11 3Z" fill="#8e8e8e" stroke="#3a3a3a" stroke-width="1.300"/><path d="M24.5 18.5V23.5H19.5Z" fill="#111"/></svg>
<svg class="a" style="left:13px;top:398px" width="22" height="20.3" viewBox="0 0 26 24"><ellipse cx="9" cy="10" rx="7.500" ry="5.500" fill="none" stroke="#3a3a3a" stroke-width="1.500"/><path d="M15 12Q19 16 22 15" fill="none" stroke="#3a3a3a" stroke-width="2"/><circle cx="8" cy="10" r="2" fill="none" stroke="#3a3a3a"/><path d="M24.5 18.5V23.5H19.5Z" fill="#111"/></svg>
<svg class="a" style="left:13px;top:426px" width="22" height="20.3" viewBox="0 0 26 24"><path d="M3 20L5 12L13 4L19 10L11 18Z" fill="#c8c8c8" stroke="#3a3a3a" stroke-width="1.400"/><path d="M3 20L10 13" stroke="#3a3a3a" stroke-width="1.200"/><path d="M14 2L21 9" stroke="#3a3a3a" stroke-width="2.500"/><path d="M24.5 18.5V23.5H19.5Z" fill="#111"/></svg>
<div class="t" style="left:16px;top:447px;font-family:'Liberation Serif',serif;font-size:20px;font-weight:bold;line-height:20px;color:#3a3a3a">T</div>
<svg class="a" style="left:30px;top:466px" width="4.5" height="4.5" viewBox="0 0 4 4"><path d="M4 0V4H0Z" fill="#111"/></svg>
<svg class="a" style="left:13px;top:472px" width="22" height="20.3" viewBox="0 0 26 24"><path d="M7 2V17L11 13L14 20L16.500 19L13.500 12.500L19 12Z" fill="#222" stroke="#fff" stroke-width=".5"/><path d="M24.5 18.5V23.5H19.5Z" fill="#111"/></svg>
<svg class="a" style="left:13px;top:495px" width="22" height="20.3" viewBox="0 0 26 24"><path d="M3 20L20 3" stroke="#3a3a3a" stroke-width="1.800"/><path d="M24.5 18.5V23.5H19.5Z" fill="#111"/></svg>
<svg class="a" style="left:13px;top:522px" width="22" height="20.3" viewBox="0 0 26 24"><circle cx="9" cy="8" r="5" fill="#b8b8b8" stroke="#3a3a3a" stroke-width="1.200"/><ellipse cx="11" cy="12" rx="9" ry="5" fill="none" stroke="#3a3a3a" stroke-width="1.600" transform="rotate(-15 11 12)"/><path d="M3 15l4 1l-2 3z" fill="#3a3a3a"/><path d="M24.5 18.5V23.5H19.5Z" fill="#111"/></svg>
<svg class="a" style="left:13px;top:545px" width="22" height="20.3" viewBox="0 0 26 24"><ellipse cx="11" cy="12" rx="9" ry="5.500" fill="none" stroke="#3a3a3a" stroke-width="1.800" transform="rotate(15 11 12)"/><path d="M14 3h6v3h-6z" fill="#3a3a3a"/><path d="M4 17l5 0l-3 3z" fill="#3a3a3a"/><path d="M24.5 18.5V23.5H19.5Z" fill="#111"/></svg>
<svg class="a" style="left:13px;top:568px" width="22" height="20.3" viewBox="0 0 26 24"><path d="M6 20Q2 14 3 11L5 10L7 13V5Q8 3 9 5V10V3Q10.500 1 11.500 3V10V4Q13 2 14 4V11V6Q15.500 4.500 16 7V15Q16 18 14 20Z" fill="#f4f4f4" stroke="#3a3a3a" stroke-width="1.200"/><path d="M24.5 18.5V23.5H19.5Z" fill="#111"/></svg>
<svg class="a" style="left:13px;top:591px" width="22" height="20.3" viewBox="0 0 26 24"><circle cx="9" cy="9" r="6" fill="#e6e6e6" stroke="#3a3a3a" stroke-width="1.800"/><path d="M13.500 13.500L20 20" stroke="#3a3a3a" stroke-width="3"/></svg>
<div class="a" style="left:10px;top:618px;width:6px;height:6px;background:#111;border:1px solid #333"></div>
<div class="a" style="left:13px;top:621px;width:6px;height:6px;background:#fff;border:1px solid #555"></div>
<svg class="a" style="left:26px;top:616px" width="11" height="11" viewBox="0 0 11 11"><path d="M2 4V2H8M6 0l2.500 2L6 4M9 5V9M7 7l2 2.500L11 7" fill="none" stroke="#3a3a3a" stroke-width="1.200"/></svg>
<div class="a" style="left:17px;top:642px;width:21px;height:21px;background:#fff;border:1px solid #e6e6e6"></div>
<div class="a" style="left:8px;top:632px;width:20px;height:20px;background:#000;border:1px solid #e0e0e0"></div>
<div class="a" style="left:14px;top:669px;width:18px;height:13px;background:#f4f4f4;border:1px solid #333"><div class="a" style="left:4px;top:1px;width:8px;height:8px;border:1px solid #333;border-radius:50%"></div></div>
<div class="a" style="left:1570px;top:70px;width:346px;height:966px;background:#686868"></div>
<div class="a" style="left:1570px;top:70px;width:345px;height:12px;background:linear-gradient(#383838,#555);border-bottom:1px solid #222"></div>
<svg class="a" style="left:1595px;top:73px" width="8" height="6" viewBox="0 0 8 6"><path d="M3.500 0L0 3L3.500 6ZM7.500 0L4 3L7.500 6Z" fill="#d8d8d8"/></svg>
<svg class="a" style="left:1904px;top:73px" width="8" height="6" viewBox="0 0 8 6"><path d="M0 0L3.500 3L0 6ZM4 0L7.500 3L4 6Z" fill="#d8d8d8"/></svg>
<div class="a" style="left:1571px;top:82px;width:36px;height:73px;background:#d6d6d6"></div>
<div class="a" style="left:1577px;top:87px;width:24px;height:2px;background:repeating-linear-gradient(90deg,#aaa 0 1px,transparent 1px 2px)"></div>
<div class="a" style="left:1580px;top:101px;width:17px;height:13px;background:#e8e8e8;border:1px solid #555;box-shadow:1px 1px 0 #888"><div class="a" style="left:3px;top:1.500px;width:0;height:0;border-left:9px solid #444;border-top:4.500px solid transparent;border-bottom:4.500px solid transparent"></div></div>
<svg class="a" style="left:1581px;top:128px" width="16" height="19" viewBox="0 0 16 19"><rect x="1.500" y="1.500" width="4" height="4" fill="#fff" stroke="#444"/><rect x="1.500" y="7.500" width="4" height="4" fill="#fff" stroke="#444"/><rect x="1" y="13" width="5" height="5" fill="#555"/><path d="M9 4Q15 5 13.500 11Q13 14 9 15" fill="none" stroke="#444" stroke-width="2"/><path d="M7 4l5-3v6z" fill="#444"/></svg>
<div class="a" style="left:1607px;top:82px;width:1px;height:954px;background:#747474"></div>
<div class="a" style="left:1608px;top:82px;width:307px;height:115px;background:#d6d6d6"></div>
<div class="a" style="left:1608px;top:82px;width:307px;height:17px;background:linear-gradient(#a3a3a3,#949494);border-bottom:1px solid #7c7c7c"></div>
<div class="a" style="left:1608px;top:82px;width:38px;height:17px;background:linear-gradient(#e2e2e2,#d6d6d6);border-right:1px solid #6e6e6e"></div>
<div class="t" style="left:1614px;top:85px;font-size:10.4px;line-height:12px;color:#111">Farbe</div>
<div class="a" style="left:1646px;top:82px;width:62px;height:17px;border-right:1px solid #6e6e6e"></div>
<div class="t" style="left:1653px;top:85px;font-size:10.4px;line-height:12px;color:#1c1c1c">Farbfelder</div>
<div class="a" style="left:1708px;top:82px;width:72px;height:17px;border-right:1px solid #6e6e6e"></div>
<div class="t" style="left:1715px;top:85px;font-size:10.4px;line-height:12px;color:#1c1c1c">Korrekturen</div>
<div class="a" style="left:1780px;top:82px;width:42px;height:17px;border-right:1px solid #6e6e6e"></div>
<div class="t" style="left:1787px;top:85px;font-size:10.4px;line-height:12px;color:#1c1c1c">Pinsel</div>
<svg class="a" style="left:1896px;top:87px" width="15" height="8" viewBox="0 0 15 8"><path d="M0 1h5l-2.500 3z" fill="#333"/><path d="M6 1.500h9M6 4h9M6 6.500h9" stroke="#444" stroke-width="1"/></svg>
<div class="a" style="left:1628px;top:120px;width:19px;height:19px;background:#fff;border:1px solid #bdbdbd"></div>
<div class="a" style="left:1615px;top:108px;width:20px;height:20px;background:#000;border:1px solid #fff;box-shadow:0 0 0 1px #222"></div>
<div class="t" style="left:1651px;top:108px;font-size:10px;line-height:11px;color:#111">R</div>
<div class="a" style="left:1665px;top:111px;width:134px;height:5px;background:linear-gradient(90deg,#000,#e82020)"></div>
<svg class="a" style="left:1660px;top:116px" width="10" height="7" viewBox="0 0 10 7"><path d="M5 .5L9.500 6.500H.5Z" fill="#e8f4e8" stroke="#5a8a5a"/></svg>
<div class="a" style="left:1805px;top:106px;width:31px;height:18px;background:#fff;border:1px solid #ececec"></div>
<div class="t" style="left:1810px;top:110px;font-size:10px;line-height:11px;color:#111">0</div>
<div class="t" style="left:1651px;top:131px;font-size:10px;line-height:11px;color:#111">G</div>
<div class="a" style="left:1665px;top:134px;width:134px;height:5px;background:linear-gradient(90deg,#000,#30e020)"></div>
<svg class="a" style="left:1660px;top:139px" width="10" height="7" viewBox="0 0 10 7"><path d="M5 .5L9.500 6.500H.5Z" fill="#e8f4e8" stroke="#5a8a5a"/></svg>
<div class="a" style="left:1805px;top:129px;width:31px;height:18px;background:#fff;border:1px solid #ececec"></div>
<div class="t" style="left:1810px;top:133px;font-size:10px;line-height:11px;color:#111">0</div>
<div class="t" style="left:1651px;top:154px;font-size:10px;line-height:11px;color:#111">B</div>
<div class="a" style="left:1665px;top:157px;width:134px;height:5px;background:linear-gradient(90deg,#000,#4020f0)"></div>
<svg class="a" style="left:1660px;top:162px" width="10" height="7" viewBox="0 0 10 7"><path d="M5 .5L9.500 6.500H.5Z" fill="#e8f4e8" stroke="#5a8a5a"/></svg>
<div class="a" style="left:1805px;top:152px;width:31px;height:18px;background:#fff;border:1px solid #ececec"></div>
<div class="t" style="left:1810px;top:156px;font-size:10px;line-height:11px;color:#111">0</div>
<div class="a" style="left:1630px;top:178px;width:198px;height:15px;background:linear-gradient(rgba(255,255,255,.55),rgba(255,255,255,0) 45%,rgba(0,0,0,0) 55%,rgba(0,0,0,.75)),linear-gradient(90deg,#f00,#ff0 17%,#0f0 33%,#0ff 50%,#00f 67%,#f0f 83%,#f00)"></div>
<div class="a" style="left:1820px;top:178px;width:8px;height:7px;background:#fff"></div>
<div class="a" style="left:1820px;top:185px;width:8px;height:8px;background:#000"></div>
<div class="a" style="left:1608px;top:197px;width:307px;height:3px;background:#4a4a4a"></div>
<div class="a" style="left:1608px;top:200px;width:307px;height:622px;background:#d6d6d6"></div>
<div class="a" style="left:1608px;top:200px;width:307px;height:17px;background:linear-gradient(#a3a3a3,#949494);border-bottom:1px solid #7c7c7c"></div>
<div class="a" style="left:1608px;top:200px;width:46px;height:17px;background:linear-gradient(#e2e2e2,#d6d6d6);border-right:1px solid #6e6e6e"></div>
<div class="t" style="left:1614px;top:203px;font-size:10.4px;line-height:12px;color:#111">Ebenen</div>
<div class="a" style="left:1654px;top:200px;width:46px;height:17px;border-right:1px solid #6e6e6e"></div>
<div class="t" style="left:1661px;top:203px;font-size:10.4px;line-height:12px;color:#1c1c1c">Kanäle</div>
<div class="a" style="left:1700px;top:200px;width:50px;height:17px;border-right:1px solid #6e6e6e"></div>
<div class="t" style="left:1707px;top:203px;font-size:10.4px;line-height:12px;color:#1c1c1c">Masken</div>
<div class="a" style="left:1750px;top:200px;width:43px;height:17px;border-right:1px solid #6e6e6e"></div>
<div class="t" style="left:1757px;top:203px;font-size:10.4px;line-height:12px;color:#1c1c1c">Pfade</div>
<svg class="a" style="left:1896px;top:205px" width="15" height="8" viewBox="0 0 15 8"><path d="M0 1h5l-2.500 3z" fill="#333"/><path d="M6 1.500h9M6 4h9M6 6.500h9" stroke="#444" stroke-width="1"/></svg>
<div class="a" style="left:1612px;top:221px;width:160px;height:17px;background:#fff;border:1px solid #ededed"></div>
<div class="t" style="left:1616px;top:225px;font-size:10px;line-height:11px;color:#111">Normal</div>
<div class="a" style="left:1761px;top:228px;width:0;height:0;border-left:3.5px solid transparent;border-right:3.5px solid transparent;border-top:4px solid #111"></div>
<div class="t" style="left:1776px;top:224px;font-size:10px;line-height:11px;color:#111">Deckkraft:</div>
<div class="a" style="left:1827px;top:221px;width:36px;height:17px;background:#fff;border:1px solid #ededed"></div>
<div class="t" style="left:1832px;top:225px;font-size:10px;line-height:11px;color:#111">100%</div>
<div class="a" style="left:1863px;top:221px;width:16px;height:17px;background:#dedede;border:1px solid #b8b8b8"><div class="a" style="left:5px;top:4px;width:0;height:0;border-left:4px solid #4a6a9a;border-top:3.500px solid transparent;border-bottom:3.500px solid transparent"></div></div>
<div class="a" style="left:1611px;top:241px;width:300px;height:1px;background:#bcbcbc"></div>
<div class="a" style="left:1611px;top:242px;width:300px;height:1px;background:#ebebeb"></div>
<div class="t" style="left:1616px;top:250px;font-size:10px;line-height:11px;color:#111">Fixieren:</div>
<div class="a" style="left:1660px;top:249px;width:11px;height:11px;border:1px solid #aaa;background:repeating-conic-gradient(#fff 0 25%,#ccc 0 50%) 0 0/6px 6px"></div>
<svg class="a" style="left:1677px;top:248px" width="13" height="13" viewBox="0 0 13 13"><path d="M1 12Q1 8 4 8L5.500 9.500Q5 12 1 12Z" fill="#888"/><path d="M5 8L11 1L12 2L6.500 9Z" fill="#999" stroke="#777" stroke-width=".6"/></svg>
<svg class="a" style="left:1695px;top:248px" width="13" height="13" viewBox="0 0 13 13"><path d="M6.500 1V12M1 6.500H12" stroke="#111" stroke-width="1.200"/><path d="M6.500 0l-2 2.500h4zM6.500 13l-2-2.500h4zM0 6.500l2.500-2v4zM13 6.500l-2.500-2v4z" fill="#111"/></svg>
<svg class="a" style="left:1714px;top:248px" width="11" height="13" viewBox="0 0 11 13"><path d="M3 6V4A2.500 2.500 0 0 1 8 4V6" fill="none" stroke="#222" stroke-width="1.600"/><rect x="1" y="6" width="9" height="6" fill="#222"/><rect x="4.500" y="8" width="2" height="2.500" fill="#ddd"/></svg>
<div class="t" style="left:1791px;top:250px;font-size:10px;line-height:11px;color:#111">Fläche:</div>
<div class="a" style="left:1827px;top:247px;width:36px;height:17px;background:#fff;border:1px solid #ededed"></div>
<div class="t" style="left:1832px;top:251px;font-size:10px;line-height:11px;color:#111">100%</div>
<div class="a" style="left:1863px;top:247px;width:16px;height:17px;background:#dedede;border:1px solid #b8b8b8"><div class="a" style="left:5px;top:4px;width:0;height:0;border-left:4px solid #4a6a9a;border-top:3.500px solid transparent;border-bottom:3.500px solid transparent"></div></div>
<div class="a" style="left:1632px;top:268px;width:266px;height:38px;background:#3399ff"></div>
<div class="a" style="left:1608px;top:306px;width:290px;height:1px;background:#8e8e8e"></div>
<div class="a" style="left:1612px;top:279px;width:15px;height:16px;border:1px solid #c6c6c6;border-right-color:#e6e6e6;border-bottom-color:#e6e6e6;background:#d9d9d9"></div>
<svg class="a" style="left:1614px;top:283px;opacity:1" width="12" height="9" viewBox="0 0 12 9"><ellipse cx="6" cy="4.700" rx="5.600" ry="3.900" fill="#7a7a7a"/><ellipse cx="6" cy="4.500" rx="5" ry="3.300" fill="#3c3c3c"/><path d="M1 4.200Q6 -.5 11 4.200" fill="none" stroke="#1e1e1e" stroke-width="1.500"/><ellipse cx="5.500" cy="4.600" rx="2.300" ry="1.700" fill="#111"/><ellipse cx="4.600" cy="4" rx="1.200" ry=".7" fill="#8a8a8a"/></svg>
<div class="a" style="left:1635px;top:271px;width:24px;height:32px;background:#fff;border:1px solid #000;box-shadow:0 0 0 1px #fff,0 0 0 2px #000;"><div class="a" style="left:0;top:0;width:22px;height:30px;background:repeating-conic-gradient(#fff 0 25%,#d0d0d0 0 50%) 0 0/8px 8px"></div><div class="a" style="left:9px;top:16px;width:14px;height:15px;background:#3399ff;border-left:1px solid #000;border-top:1px solid #000"></div><div class="a" style="left:12px;top:21px;width:9px;height:9px;background:#fff;border:1px solid #555"></div><div class="a" style="left:15px;top:22px;width:6px;height:6px;background:#000"></div><div class="a" style="left:13px;top:25px;width:5px;height:5px;background:#fff"></div></div>
<div class="t" style="left:1667px;top:283px;font-size:10px;line-height:12px;color:#fff;font-weight:bold;letter-spacing:1px">2012_p</div>
<div class="a" style="left:1608px;top:345px;width:290px;height:1px;background:#8e8e8e"></div>
<div class="a" style="left:1612px;top:318px;width:15px;height:16px;border:1px solid #c6c6c6;border-right-color:#e6e6e6;border-bottom-color:#e6e6e6;background:#d9d9d9"></div>
<svg class="a" style="left:1614px;top:322px;opacity:1" width="12" height="9" viewBox="0 0 12 9"><ellipse cx="6" cy="4.700" rx="5.600" ry="3.900" fill="#7a7a7a"/><ellipse cx="6" cy="4.500" rx="5" ry="3.300" fill="#3c3c3c"/><path d="M1 4.200Q6 -.5 11 4.200" fill="none" stroke="#1e1e1e" stroke-width="1.500"/><ellipse cx="5.500" cy="4.600" rx="2.300" ry="1.700" fill="#111"/><ellipse cx="4.600" cy="4" rx="1.200" ry=".7" fill="#8a8a8a"/></svg>
<div class="a" style="left:1635px;top:310px;width:24px;height:32px;background:#fff;border:1px solid #000;"><div class="a" style="left:0;top:0;width:22px;height:30px;background:repeating-conic-gradient(#fff 0 25%,#d0d0d0 0 50%) 0 0/8px 8px"></div><div class="a" style="left:9px;top:16px;width:14px;height:15px;background:#d6d6d6;border-left:1px solid #000;border-top:1px solid #000"></div><div class="a" style="left:12px;top:21px;width:9px;height:9px;background:#fff;border:1px solid #555"></div><div class="a" style="left:15px;top:22px;width:6px;height:6px;background:#000"></div><div class="a" style="left:13px;top:25px;width:5px;height:5px;background:#fff"></div></div>
<div class="t" style="left:1667px;top:322px;font-size:10px;line-height:12px;color:#111">november_p</div>
<div class="a" style="left:1608px;top:384px;width:290px;height:1px;background:#8e8e8e"></div>
<div class="a" style="left:1612px;top:357px;width:15px;height:16px;border:1px solid #c6c6c6;border-right-color:#e6e6e6;border-bottom-color:#e6e6e6;background:#d9d9d9"></div>
<svg class="a" style="left:1614px;top:361px;opacity:1" width="12" height="9" viewBox="0 0 12 9"><ellipse cx="6" cy="4.700" rx="5.600" ry="3.900" fill="#7a7a7a"/><ellipse cx="6" cy="4.500" rx="5" ry="3.300" fill="#3c3c3c"/><path d="M1 4.200Q6 -.5 11 4.200" fill="none" stroke="#1e1e1e" stroke-width="1.500"/><ellipse cx="5.500" cy="4.600" rx="2.300" ry="1.700" fill="#111"/><ellipse cx="4.600" cy="4" rx="1.200" ry=".7" fill="#8a8a8a"/></svg>
<div class="a" style="left:1635px;top:349px;width:24px;height:32px;background:#fff;border:1px solid #000;"><div class="a" style="left:0;top:0;width:22px;height:30px;background:repeating-conic-gradient(#fff 0 25%,#d0d0d0 0 50%) 0 0/8px 8px"></div><div class="a" style="left:2px;top:23px;width:4px;height:4px;background:#c89058"></div><div class="a" style="left:9px;top:16px;width:14px;height:15px;background:#d6d6d6;border-left:1px solid #000;border-top:1px solid #000"></div><div class="a" style="left:12px;top:21px;width:9px;height:9px;background:#fff;border:1px solid #555"></div><div class="a" style="left:15px;top:22px;width:6px;height:6px;background:#000"></div><div class="a" style="left:13px;top:25px;width:5px;height:5px;background:#fff"></div></div>
<div class="t" style="left:1667px;top:361px;font-size:10px;line-height:12px;color:#111">oktober_p</div>
<div class="a" style="left:1608px;top:423px;width:290px;height:1px;background:#8e8e8e"></div>
<div class="a" style="left:1612px;top:396px;width:15px;height:16px;border:1px solid #c6c6c6;border-right-color:#e6e6e6;border-bottom-color:#e6e6e6;background:#d9d9d9"></div>
<svg class="a" style="left:1614px;top:400px;opacity:1" width="12" height="9" viewBox="0 0 12 9"><ellipse cx="6" cy="4.700" rx="5.600" ry="3.900" fill="#7a7a7a"/><ellipse cx="6" cy="4.500" rx="5" ry="3.300" fill="#3c3c3c"/><path d="M1 4.200Q6 -.5 11 4.200" fill="none" stroke="#1e1e1e" stroke-width="1.500"/><ellipse cx="5.500" cy="4.600" rx="2.300" ry="1.700" fill="#111"/><ellipse cx="4.600" cy="4" rx="1.200" ry=".7" fill="#8a8a8a"/></svg>
<div class="a" style="left:1635px;top:388px;width:24px;height:32px;background:#fff;border:1px solid #000;"><div class="a" style="left:0;top:0;width:22px;height:30px;background:repeating-conic-gradient(#fff 0 25%,#d0d0d0 0 50%) 0 0/8px 8px"></div><div class="a" style="left:9px;top:16px;width:14px;height:15px;background:#d6d6d6;border-left:1px solid #000;border-top:1px solid #000"></div><div class="a" style="left:12px;top:21px;width:9px;height:9px;background:#fff;border:1px solid #555"></div><div class="a" style="left:15px;top:22px;width:6px;height:6px;background:#000"></div><div class="a" style="left:13px;top:25px;width:5px;height:5px;background:#fff"></div></div>
<div class="t" style="left:1667px;top:400px;font-size:10px;line-height:12px;color:#111">september_p</div>
<div class="a" style="left:1608px;top:462px;width:290px;height:1px;background:#8e8e8e"></div>
<div class="a" style="left:1612px;top:435px;width:15px;height:16px;border:1px solid #c6c6c6;border-right-color:#e6e6e6;border-bottom-color:#e6e6e6;background:#d9d9d9"></div>
<svg class="a" style="left:1614px;top:439px;opacity:1" width="12" height="9" viewBox="0 0 12 9"><ellipse cx="6" cy="4.700" rx="5.600" ry="3.900" fill="#7a7a7a"/><ellipse cx="6" cy="4.500" rx="5" ry="3.300" fill="#3c3c3c"/><path d="M1 4.200Q6 -.5 11 4.200" fill="none" stroke="#1e1e1e" stroke-width="1.500"/><ellipse cx="5.500" cy="4.600" rx="2.300" ry="1.700" fill="#111"/><ellipse cx="4.600" cy="4" rx="1.200" ry=".7" fill="#8a8a8a"/></svg>
<div class="a" style="left:1635px;top:427px;width:24px;height:32px;background:#fff;border:1px solid #000;"><div class="a" style="left:0;top:0;width:22px;height:30px;background:repeating-conic-gradient(#fff 0 25%,#d0d0d0 0 50%) 0 0/8px 8px"></div><div class="a" style="left:9px;top:16px;width:14px;height:15px;background:#d6d6d6;border-left:1px solid #000;border-top:1px solid #000"></div><div class="a" style="left:12px;top:21px;width:9px;height:9px;background:#fff;border:1px solid #555"></div><div class="a" style="left:15px;top:22px;width:6px;height:6px;background:#000"></div><div class="a" style="left:13px;top:25px;width:5px;height:5px;background:#fff"></div></div>
<div class="t" style="left:1667px;top:439px;font-size:10px;line-height:12px;color:#111">august_p</div>
<div class="a" style="left:1608px;top:501px;width:290px;height:1px;background:#8e8e8e"></div>
<div class="a" style="left:1612px;top:474px;width:15px;height:16px;border:1px solid #c6c6c6;border-right-color:#e6e6e6;border-bottom-color:#e6e6e6;background:#d9d9d9"></div>
<svg class="a" style="left:1614px;top:478px;opacity:1" width="12" height="9" viewBox="0 0 12 9"><ellipse cx="6" cy="4.700" rx="5.600" ry="3.900" fill="#7a7a7a"/><ellipse cx="6" cy="4.500" rx="5" ry="3.300" fill="#3c3c3c"/><path d="M1 4.200Q6 -.5 11 4.200" fill="none" stroke="#1e1e1e" stroke-width="1.500"/><ellipse cx="5.500" cy="4.600" rx="2.300" ry="1.700" fill="#111"/><ellipse cx="4.600" cy="4" rx="1.200" ry=".7" fill="#8a8a8a"/></svg>
<div class="a" style="left:1635px;top:466px;width:24px;height:32px;background:#fff;border:1px solid #000;"><div class="a" style="left:0;top:0;width:22px;height:30px;background:repeating-conic-gradient(#fff 0 25%,#d0d0d0 0 50%) 0 0/8px 8px"></div><div class="a" style="left:2px;top:16px;width:4px;height:4px;background:#6a665e"></div><div class="a" style="left:9px;top:16px;width:14px;height:15px;background:#d6d6d6;border-left:1px solid #000;border-top:1px solid #000"></div><div class="a" style="left:12px;top:21px;width:9px;height:9px;background:#fff;border:1px solid #555"></div><div class="a" style="left:15px;top:22px;width:6px;height:6px;background:#000"></div><div class="a" style="left:13px;top:25px;width:5px;height:5px;background:#fff"></div></div>
<div class="t" style="left:1667px;top:478px;font-size:10px;line-height:12px;color:#111">juli_p</div>
<div class="a" style="left:1608px;top:540px;width:290px;height:1px;background:#8e8e8e"></div>
<div class="a" style="left:1612px;top:513px;width:15px;height:16px;border:1px solid #c6c6c6;border-right-color:#e6e6e6;border-bottom-color:#e6e6e6;background:#d9d9d9"></div>
<svg class="a" style="left:1614px;top:517px;opacity:1" width="12" height="9" viewBox="0 0 12 9"><ellipse cx="6" cy="4.700" rx="5.600" ry="3.900" fill="#7a7a7a"/><ellipse cx="6" cy="4.500" rx="5" ry="3.300" fill="#3c3c3c"/><path d="M1 4.200Q6 -.5 11 4.200" fill="none" stroke="#1e1e1e" stroke-width="1.500"/><ellipse cx="5.500" cy="4.600" rx="2.300" ry="1.700" fill="#111"/><ellipse cx="4.600" cy="4" rx="1.200" ry=".7" fill="#8a8a8a"/></svg>
<div class="a" style="left:1635px;top:505px;width:24px;height:32px;background:#fff;border:1px solid #000;"><div class="a" style="left:0;top:0;width:22px;height:30px;background:repeating-conic-gradient(#fff 0 25%,#d0d0d0 0 50%) 0 0/8px 8px"></div><div class="a" style="left:16px;top:9px;width:4px;height:4px;background:#6a7a60"></div><div class="a" style="left:9px;top:16px;width:14px;height:15px;background:#d6d6d6;border-left:1px solid #000;border-top:1px solid #000"></div><div class="a" style="left:12px;top:21px;width:9px;height:9px;background:#fff;border:1px solid #555"></div><div class="a" style="left:15px;top:22px;width:6px;height:6px;background:#000"></div><div class="a" style="left:13px;top:25px;width:5px;height:5px;background:#fff"></div></div>
<div class="t" style="left:1667px;top:517px;font-size:10px;line-height:12px;color:#111">juni_p</div>
<div class="a" style="left:1608px;top:579px;width:290px;height:1px;background:#8e8e8e"></div>
<div class="a" style="left:1612px;top:552px;width:15px;height:16px;border:1px solid #c6c6c6;border-right-color:#e6e6e6;border-bottom-color:#e6e6e6;background:#d9d9d9"></div>
<svg class="a" style="left:1614px;top:556px;opacity:1" width="12" height="9" viewBox="0 0 12 9"><ellipse cx="6" cy="4.700" rx="5.600" ry="3.900" fill="#7a7a7a"/><ellipse cx="6" cy="4.500" rx="5" ry="3.300" fill="#3c3c3c"/><path d="M1 4.200Q6 -.5 11 4.200" fill="none" stroke="#1e1e1e" stroke-width="1.500"/><ellipse cx="5.500" cy="4.600" rx="2.300" ry="1.700" fill="#111"/><ellipse cx="4.600" cy="4" rx="1.200" ry=".7" fill="#8a8a8a"/></svg>
<div class="a" style="left:1635px;top:544px;width:24px;height:32px;background:#fff;border:1px solid #000;"><div class="a" style="left:0;top:0;width:22px;height:30px;background:repeating-conic-gradient(#fff 0 25%,#d0d0d0 0 50%) 0 0/8px 8px"></div><div class="a" style="left:9px;top:9px;width:4px;height:4px;background:#d08a20"></div><div class="a" style="left:9px;top:16px;width:14px;height:15px;background:#d6d6d6;border-left:1px solid #000;border-top:1px solid #000"></div><div class="a" style="left:12px;top:21px;width:9px;height:9px;background:#fff;border:1px solid #555"></div><div class="a" style="left:15px;top:22px;width:6px;height:6px;background:#000"></div><div class="a" style="left:13px;top:25px;width:5px;height:5px;background:#fff"></div></div>
<div class="t" style="left:1667px;top:556px;font-size:10px;line-height:12px;color:#111">mai_p</div>
<div class="a" style="left:1608px;top:618px;width:290px;height:1px;background:#8e8e8e"></div>
<div class="a" style="left:1612px;top:591px;width:15px;height:16px;border:1px solid #c6c6c6;border-right-color:#e6e6e6;border-bottom-color:#e6e6e6;background:#d9d9d9"></div>
<svg class="a" style="left:1614px;top:595px;opacity:1" width="12" height="9" viewBox="0 0 12 9"><ellipse cx="6" cy="4.700" rx="5.600" ry="3.900" fill="#7a7a7a"/><ellipse cx="6" cy="4.500" rx="5" ry="3.300" fill="#3c3c3c"/><path d="M1 4.200Q6 -.5 11 4.200" fill="none" stroke="#1e1e1e" stroke-width="1.500"/><ellipse cx="5.500" cy="4.600" rx="2.300" ry="1.700" fill="#111"/><ellipse cx="4.600" cy="4" rx="1.200" ry=".7" fill="#8a8a8a"/></svg>
<div class="a" style="left:1635px;top:583px;width:24px;height:32px;background:#fff;border:1px solid #000;"><div class="a" style="left:0;top:0;width:22px;height:30px;background:repeating-conic-gradient(#fff 0 25%,#d0d0d0 0 50%) 0 0/8px 8px"></div><div class="a" style="left:2px;top:9px;width:4px;height:4px;background:#8a9a40"></div><div class="a" style="left:9px;top:16px;width:14px;height:15px;background:#d6d6d6;border-left:1px solid #000;border-top:1px solid #000"></div><div class="a" style="left:12px;top:21px;width:9px;height:9px;background:#fff;border:1px solid #555"></div><div class="a" style="left:15px;top:22px;width:6px;height:6px;background:#000"></div><div class="a" style="left:13px;top:25px;width:5px;height:5px;background:#fff"></div></div>
<div class="t" style="left:1667px;top:595px;font-size:10px;line-height:12px;color:#111">april_p</div>
<div class="a" style="left:1608px;top:657px;width:290px;height:1px;background:#8e8e8e"></div>
<div class="a" style="left:1612px;top:630px;width:15px;height:16px;border:1px solid #c6c6c6;border-right-color:#e6e6e6;border-bottom-color:#e6e6e6;background:#d9d9d9"></div>
<svg class="a" style="left:1614px;top:634px;opacity:1" width="12" height="9" viewBox="0 0 12 9"><ellipse cx="6" cy="4.700" rx="5.600" ry="3.900" fill="#7a7a7a"/><ellipse cx="6" cy="4.500" rx="5" ry="3.300" fill="#3c3c3c"/><path d="M1 4.200Q6 -.5 11 4.200" fill="none" stroke="#1e1e1e" stroke-width="1.500"/><ellipse cx="5.500" cy="4.600" rx="2.300" ry="1.700" fill="#111"/><ellipse cx="4.600" cy="4" rx="1.200" ry=".7" fill="#8a8a8a"/></svg>
<div class="a" style="left:1635px;top:622px;width:24px;height:32px;background:#fff;border:1px solid #000;"><div class="a" style="left:0;top:0;width:22px;height:30px;background:repeating-conic-gradient(#fff 0 25%,#d0d0d0 0 50%) 0 0/8px 8px"></div><div class="a" style="left:16px;top:2px;width:4px;height:4px;background:#8a6a40"></div><div class="a" style="left:9px;top:16px;width:14px;height:15px;background:#d6d6d6;border-left:1px solid #000;border-top:1px solid #000"></div><div class="a" style="left:12px;top:21px;width:9px;height:9px;background:#fff;border:1px solid #555"></div><div class="a" style="left:15px;top:22px;width:6px;height:6px;background:#000"></div><div class="a" style="left:13px;top:25px;width:5px;height:5px;background:#fff"></div></div>
<div class="t" style="left:1667px;top:634px;font-size:10px;line-height:12px;color:#111">maerz_p</div>
<div class="a" style="left:1608px;top:696px;width:290px;height:1px;background:#8e8e8e"></div>
<div class="a" style="left:1612px;top:669px;width:15px;height:16px;border:1px solid #c6c6c6;border-right-color:#e6e6e6;border-bottom-color:#e6e6e6;background:#d9d9d9"></div>
<svg class="a" style="left:1614px;top:673px;opacity:1" width="12" height="9" viewBox="0 0 12 9"><ellipse cx="6" cy="4.700" rx="5.600" ry="3.900" fill="#7a7a7a"/><ellipse cx="6" cy="4.500" rx="5" ry="3.300" fill="#3c3c3c"/><path d="M1 4.200Q6 -.5 11 4.200" fill="none" stroke="#1e1e1e" stroke-width="1.500"/><ellipse cx="5.500" cy="4.600" rx="2.300" ry="1.700" fill="#111"/><ellipse cx="4.600" cy="4" rx="1.200" ry=".7" fill="#8a8a8a"/></svg>
<div class="a" style="left:1635px;top:661px;width:24px;height:32px;background:#fff;border:1px solid #000;"><div class="a" style="left:0;top:0;width:22px;height:30px;background:repeating-conic-gradient(#fff 0 25%,#d0d0d0 0 50%) 0 0/8px 8px"></div><div class="a" style="left:9px;top:2px;width:4px;height:4px;background:#d8d0a8"></div><div class="a" style="left:9px;top:16px;width:14px;height:15px;background:#d6d6d6;border-left:1px solid #000;border-top:1px solid #000"></div><div class="a" style="left:12px;top:21px;width:9px;height:9px;background:#fff;border:1px solid #555"></div><div class="a" style="left:15px;top:22px;width:6px;height:6px;background:#000"></div><div class="a" style="left:13px;top:25px;width:5px;height:5px;background:#fff"></div></div>
<div class="t" style="left:1667px;top:673px;font-size:10px;line-height:12px;color:#111">februar_p</div>
<div class="a" style="left:1608px;top:735px;width:290px;height:1px;background:#8e8e8e"></div>
<div class="a" style="left:1612px;top:708px;width:15px;height:16px;border:1px solid #c6c6c6;border-right-color:#e6e6e6;border-bottom-color:#e6e6e6;background:#d9d9d9"></div>
<svg class="a" style="left:1614px;top:712px;opacity:1" width="12" height="9" viewBox="0 0 12 9"><ellipse cx="6" cy="4.700" rx="5.600" ry="3.900" fill="#7a7a7a"/><ellipse cx="6" cy="4.500" rx="5" ry="3.300" fill="#3c3c3c"/><path d="M1 4.200Q6 -.5 11 4.200" fill="none" stroke="#1e1e1e" stroke-width="1.500"/><ellipse cx="5.500" cy="4.600" rx="2.300" ry="1.700" fill="#111"/><ellipse cx="4.600" cy="4" rx="1.200" ry=".7" fill="#8a8a8a"/></svg>
<div class="a" style="left:1635px;top:700px;width:24px;height:32px;background:#fff;border:1px solid #000;"><div class="a" style="left:0;top:0;width:22px;height:30px;background:repeating-conic-gradient(#fff 0 25%,#d0d0d0 0 50%) 0 0/8px 8px"></div><div class="a" style="left:2px;top:2px;width:4px;height:4px;background:#7a6a60"></div><div class="a" style="left:9px;top:16px;width:14px;height:15px;background:#d6d6d6;border-left:1px solid #000;border-top:1px solid #000"></div><div class="a" style="left:12px;top:21px;width:9px;height:9px;background:#fff;border:1px solid #555"></div><div class="a" style="left:15px;top:22px;width:6px;height:6px;background:#000"></div><div class="a" style="left:13px;top:25px;width:5px;height:5px;background:#fff"></div></div>
<div class="t" style="left:1667px;top:712px;font-size:10px;line-height:12px;color:#111">januar_p</div>
<div class="a" style="left:1631px;top:268px;width:1px;height:468px;background:#8e8e8e"></div>
<div class="a" style="left:1631px;top:736px;width:1px;height:70px;background:#b0b0b0"></div>
<div class="a" style="left:1635px;top:739px;width:24px;height:32px;background:#bebebe;border:1px solid #333"></div>
<div class="a" style="left:1608px;top:741px;width:24px;height:27px;border:5px solid #ee1111;background:#d6d6d6"></div>
<div class="t" style="left:1667px;top:751px;font-size:10px;line-height:12px;color:#111">Meine Ebene</div>
<div class="t" style="left:1869px;top:748px;font-family:'Liberation Serif',serif;font-style:italic;font-weight:bold;font-size:14px;line-height:14px;color:#333">fx</div>
<div class="a" style="left:1887px;top:737px;width:1px;height:38px;background:#c2c2c2"></div>
<div class="a" style="left:1889px;top:752px;width:0;height:0;border-bottom:4px solid #333;border-left:3.500px solid transparent;border-right:3.500px solid transparent"></div>
<svg class="a" style="left:1652px;top:778px;opacity:0.55" width="12" height="9" viewBox="0 0 12 9"><ellipse cx="6" cy="4.700" rx="5.600" ry="3.900" fill="#7a7a7a"/><ellipse cx="6" cy="4.500" rx="5" ry="3.300" fill="#3c3c3c"/><path d="M1 4.200Q6 -.5 11 4.200" fill="none" stroke="#1e1e1e" stroke-width="1.500"/><ellipse cx="5.500" cy="4.600" rx="2.300" ry="1.700" fill="#111"/><ellipse cx="4.600" cy="4" rx="1.200" ry=".7" fill="#8a8a8a"/></svg>
<div class="t" style="left:1669px;top:778px;font-size:10px;line-height:12px;color:#111">Effekte</div>
<div class="a" style="left:1665px;top:794px;width:233px;height:1px;background:#b4b4b4"></div>
<div class="a" style="left:1608px;top:795px;width:290px;height:10px;overflow:hidden">
<svg class="a" style="left:62px;top:3px;opacity:0.5" width="12" height="9" viewBox="0 0 12 9"><ellipse cx="6" cy="4.700" rx="5.600" ry="3.900" fill="#7a7a7a"/><ellipse cx="6" cy="4.500" rx="5" ry="3.300" fill="#3c3c3c"/><path d="M1 4.200Q6 -.5 11 4.200" fill="none" stroke="#1e1e1e" stroke-width="1.500"/><ellipse cx="5.500" cy="4.600" rx="2.300" ry="1.700" fill="#111"/><ellipse cx="4.600" cy="4" rx="1.200" ry=".7" fill="#8a8a8a"/></svg>
<div class="t" style="left:79px;top:2px;font-size:10px;line-height:12px;color:#111">Verlaufsüberlagerung</div>
</div>
<div class="a" style="left:1898px;top:268px;width:15px;height:537px;background:#e4e4e4;border-left:1px solid #bcbcbc"></div>
<div class="a" style="left:1902px;top:275px;width:0;height:0;border-bottom:4px solid #444;border-left:3.500px solid transparent;border-right:3.500px solid transparent"></div>
<div class="a" style="left:1902px;top:795px;width:0;height:0;border-top:4px solid #444;border-left:3.500px solid transparent;border-right:3.500px solid transparent"></div>
<div class="a" style="left:1900px;top:286px;width:12px;height:443px;background:linear-gradient(90deg,#f2f2f2,#d0d0d0 50%,#bdbdbd);border:1px solid #a4a4a4;border-radius:2px"></div>
<div class="a" style="left:1902px;top:503px;width:7px;height:1px;background:#555"></div>
<div class="a" style="left:1902px;top:506px;width:7px;height:1px;background:#555"></div>
<div class="a" style="left:1902px;top:509px;width:7px;height:1px;background:#555"></div>
<div class="a" style="left:1608px;top:805px;width:307px;height:17px;background:#d6d6d6;border-top:1px solid #bdbdbd"></div>
<svg class="a" style="left:1714px;top:808px" width="18" height="10" viewBox="0 0 18 10"><rect x="1" y="2.500" width="9" height="5" rx="2.500" fill="none" stroke="#999" stroke-width="1.400"/><rect x="8" y="2.500" width="9" height="5" rx="2.500" fill="none" stroke="#999" stroke-width="1.400"/></svg>
<div class="t" style="left:1743px;top:805px;font-family:'Liberation Serif',serif;font-style:italic;font-weight:bold;font-size:14px;line-height:14px;color:#444">fx</div>
<div class="a" style="left:1757px;top:817px;width:2px;height:2px;background:#222"></div>
<div class="a" style="left:1771px;top:807px;width:13px;height:12px;background:#e8e8e8;border:1px solid #444"><div class="a" style="left:2px;top:1.500px;width:7px;height:7px;border-radius:50%;background:#fff;border:1px solid #555"></div></div>
<svg class="a" style="left:1799px;top:807px" width="14" height="13" viewBox="0 0 14 13"><circle cx="6" cy="6" r="5" fill="#fff" stroke="#444" stroke-width="1.200"/><path d="M6 1A5 5 0 0 0 2.500 9.500L9.500 2.500A5 5 0 0 0 6 1Z" fill="#444"/><rect x="12" y="10" width="2" height="2" fill="#222"/></svg>
<svg class="a" style="left:1825px;top:807px" width="14" height="12" viewBox="0 0 14 12"><path d="M1 3V1h5l1 1.500h5V10H1Z" fill="#f0f0f0" stroke="#888" stroke-width="1"/></svg>
<svg class="a" style="left:1852px;top:807px" width="13" height="13" viewBox="0 0 13 13"><path d="M1.500 1.500H9L11.500 4V11.500H1.500Z" fill="#f6f6f6" stroke="#777" stroke-width="1"/><rect x="6" y="6" width="5" height="5" fill="#fff" stroke="#555"/></svg>
<svg class="a" style="left:1880px;top:806px" width="11" height="14" viewBox="0 0 11 14"><path d="M1 3.500H10M4 3V1.500H7V3M2 4L3 13H8L9 4" fill="#eee" stroke="#444" stroke-width="1.200"/><path d="M4 6V11M5.500 6V11M7 6V11" stroke="#444" stroke-width=".8"/></svg>
<div class="a" style="left:1608px;top:822px;width:307px;height:3px;background:#4a4a4a"></div>
<div class="a" style="left:1608px;top:825px;width:307px;height:211px;background:#d6d6d6"></div>
<div class="a" style="left:1608px;top:825px;width:307px;height:17px;background:linear-gradient(#a3a3a3,#949494);border-bottom:1px solid #7c7c7c"></div>
<div class="a" style="left:1608px;top:825px;width:50px;height:17px;background:linear-gradient(#e2e2e2,#d6d6d6);border-right:1px solid #6e6e6e"></div>
<div class="t" style="left:1614px;top:828px;font-size:10.4px;line-height:12px;color:#111">Zeichen</div>
<div class="a" style="left:1658px;top:825px;width:45px;height:17px;border-right:1px solid #6e6e6e"></div>
<div class="t" style="left:1665px;top:828px;font-size:10.4px;line-height:12px;color:#1c1c1c">Absatz</div>
<svg class="a" style="left:1896px;top:830px" width="15" height="8" viewBox="0 0 15 8"><path d="M0 1h5l-2.500 3z" fill="#333"/><path d="M6 1.500h9M6 4h9M6 6.500h9" stroke="#444" stroke-width="1"/></svg>
<div class="a" style="left:1612px;top:848px;width:123px;height:18px;background:#fff;border:1px solid #ededed"></div>
<div class="t" style="left:1617px;top:852px;font-size:10px;line-height:11px;color:#111">Champignon</div>
<div class="a" style="left:1722px;top:856px;width:0;height:0;border-left:3.5px solid transparent;border-right:3.5px solid transparent;border-top:4px solid #111"></div>
<div class="a" style="left:1741px;top:848px;width:72px;height:18px;background:#fff;border:1px solid #ededed"></div>
<div class="t" style="left:1746px;top:852px;font-size:10px;line-height:11px;color:#111">Medium</div>
<div class="a" style="left:1794px;top:850px;width:1px;height:14px;background:#ddd"></div>
<div class="a" style="left:1801px;top:856px;width:0;height:0;border-left:3.5px solid transparent;border-right:3.5px solid transparent;border-top:4px solid #b0b0b0"></div>
<div class="a" style="left:1611px;top:871px;width:203px;height:1px;background:#b8b8b8"></div>
<div class="a" style="left:1611px;top:872px;width:203px;height:1px;background:#ececec"></div>
<div class="t" style="left:1620px;top:877px;font-family:'Liberation Serif',serif;font-weight:bold;color:#222;font-size:19px;line-height:19px">T</div>
<div class="t" style="left:1615px;top:884px;font-family:'Liberation Serif',serif;font-weight:bold;color:#222;font-size:11px;line-height:11px;color:#666">T</div>
<div class="a" style="left:1638px;top:877px;width:55px;height:18px;background:#fff;border:1px solid #ededed"></div>
<div class="t" style="left:1643px;top:881px;font-size:10px;line-height:11px;color:#111">130 Pt</div>
<div class="a" style="left:1693px;top:877px;width:18px;height:18px;background:linear-gradient(#f2f2f2,#d4d4d4);border:1px solid #8c8c8c;border-radius:1px"></div>
<div class="a" style="left:1698px;top:885px;width:0;height:0;border-left:3.5px solid transparent;border-right:3.5px solid transparent;border-top:4px solid #111"></div>
<div class="t" style="left:1722px;top:876px;font-size:8px;line-height:8px;font-weight:bold;color:#222">A</div>
<div class="t" style="left:1720px;top:884px;font-size:11px;line-height:11px;font-weight:bold;color:#222">A</div>
<div class="a" style="left:1719px;top:882px;width:1px;height:12px;background:#222"></div>
<div class="a" style="left:1719px;top:882px;width:12px;height:1px;background:#222"></div>
<div class="a" style="left:1741px;top:877px;width:54px;height:18px;background:#fff;border:1px solid #ededed"></div>
<div class="t" style="left:1746px;top:881px;font-size:10px;line-height:11px;color:#111">335 Pt</div>
<div class="a" style="left:1795px;top:877px;width:18px;height:18px;background:linear-gradient(#f2f2f2,#d4d4d4);border:1px solid #8c8c8c;border-radius:1px"></div>
<div class="a" style="left:1800px;top:885px;width:0;height:0;border-left:3.5px solid transparent;border-right:3.5px solid transparent;border-top:4px solid #111"></div>
<div class="t" style="left:1616px;top:902px;font-size:10px;line-height:11px;color:#222;font-weight:bold">A</div>
<div class="t" style="left:1623px;top:904px;font-size:10px;line-height:11px;color:#222;font-weight:bold">V</div>
<div class="a" style="left:1622px;top:899px;width:1px;height:17px;background:#222"></div>
<div class="a" style="left:1638px;top:900px;width:55px;height:18px;background:#d2d2d2;border:1px solid #ededed"></div>
<div class="a" style="left:1693px;top:900px;width:18px;height:18px;background:linear-gradient(#f2f2f2,#d4d4d4);border:1px solid #8c8c8c;border-radius:1px"></div>
<div class="a" style="left:1698px;top:908px;width:0;height:0;border-left:3.5px solid transparent;border-right:3.5px solid transparent;border-top:4px solid #111"></div>
<div class="t" style="left:1718px;top:901px;font-size:11px;line-height:11px;color:#222;font-weight:bold;background:#b4b4b4;letter-spacing:.5px">AV</div>
<div class="a" style="left:1719px;top:914px;width:15px;height:1px;background:#222"></div>
<div class="a" style="left:1741px;top:900px;width:54px;height:18px;background:#fff;border:1px solid #ededed"></div>
<div class="t" style="left:1746px;top:904px;font-size:10px;line-height:11px;color:#111">80</div>
<div class="a" style="left:1795px;top:900px;width:18px;height:18px;background:linear-gradient(#f2f2f2,#d4d4d4);border:1px solid #8c8c8c;border-radius:1px"></div>
<div class="a" style="left:1800px;top:908px;width:0;height:0;border-left:3.5px solid transparent;border-right:3.5px solid transparent;border-top:4px solid #111"></div>
<div class="a" style="left:1611px;top:922px;width:203px;height:1px;background:#b8b8b8"></div>
<div class="a" style="left:1611px;top:923px;width:203px;height:1px;background:#ececec"></div>
<div class="a" style="left:1616px;top:930px;width:1px;height:14px;background:#222"></div>
<div class="t" style="left:1619px;top:928px;font-family:'Liberation Serif',serif;font-weight:bold;color:#222;font-size:18px;line-height:18px">T</div>
<div class="a" style="left:1638px;top:928px;width:55px;height:16px;background:#fff;border:1px solid #ededed"></div>
<div class="t" style="left:1643px;top:931px;font-size:10px;line-height:11px;color:#111">120%</div>
<div class="t" style="left:1719px;top:926px;font-family:'Liberation Serif',serif;font-weight:bold;color:#222;font-size:18px;line-height:17px;transform:scaleX(1.25);transform-origin:left">T</div>
<div class="a" style="left:1718px;top:943px;width:16px;height:1px;background:#222"></div>
<div class="a" style="left:1741px;top:928px;width:54px;height:16px;background:#fff;border:1px solid #ededed"></div>
<div class="t" style="left:1746px;top:931px;font-size:10px;line-height:11px;color:#111">100%</div>
<div class="t" style="left:1616px;top:951px;font-size:11px;line-height:11px;color:#222;font-weight:bold">A</div>
<div class="t" style="left:1625px;top:948px;font-size:9px;line-height:9px;color:#222;font-weight:bold">a</div>
<div class="a" style="left:1625px;top:957px;width:6px;height:1px;background:#222"></div>
<div class="a" style="left:1638px;top:949px;width:55px;height:16px;background:#fff;border:1px solid #ededed"></div>
<div class="t" style="left:1643px;top:952px;font-size:10px;line-height:11px;color:#111">0 Pt</div>
<div class="t" style="left:1709px;top:952px;font-size:10px;line-height:11px;color:#111">Farbe:</div>
<div class="a" style="left:1742px;top:950px;width:53px;height:14px;background:#000"></div>
<div class="a" style="left:1611px;top:969px;width:203px;height:1px;background:#b8b8b8"></div>
<div class="a" style="left:1611px;top:970px;width:203px;height:1px;background:#ececec"></div>
<div class="t" style="left:1624px;top:978px;font-family:'Liberation Serif',serif;font-weight:bold;color:#111;font-size:15px;line-height:15px;">T</div>
<div class="t" style="left:1646px;top:978px;font-family:'Liberation Serif',serif;font-weight:bold;color:#111;font-size:15px;line-height:15px;font-style:italic">T</div>
<div class="t" style="left:1671px;top:978px;font-family:'Liberation Serif',serif;font-weight:bold;color:#111;font-size:15px;line-height:15px;letter-spacing:-.5px">TT</div>
<div class="t" style="left:1695px;top:978px;font-family:'Liberation Serif',serif;font-weight:bold;color:#111;font-size:15px;line-height:15px;">T</div>
<div class="t" style="left:1704px;top:981px;font-family:'Liberation Serif',serif;font-weight:bold;color:#111;font-size:15px;line-height:15px;font-size:11px;line-height:12px">T</div>
<div class="t" style="left:1717px;top:978px;font-family:'Liberation Serif',serif;font-weight:bold;color:#111;font-size:15px;line-height:15px;">T</div>
<div class="t" style="left:1727px;top:977px;font-family:'Liberation Serif',serif;font-weight:bold;color:#111;font-size:15px;line-height:15px;font-size:7px;line-height:7px">1</div>
<div class="t" style="left:1738px;top:978px;font-family:'Liberation Serif',serif;font-weight:bold;color:#111;font-size:15px;line-height:15px;">T</div>
<div class="t" style="left:1748px;top:987px;font-family:'Liberation Serif',serif;font-weight:bold;color:#111;font-size:15px;line-height:15px;font-size:7px;line-height:7px">1</div>
<div class="t" style="left:1768px;top:978px;font-family:'Liberation Serif',serif;font-weight:bold;color:#111;font-size:15px;line-height:15px;text-decoration:underline">T</div>
<div class="t" style="left:1789px;top:978px;font-family:'Liberation Serif',serif;font-weight:bold;color:#111;font-size:15px;line-height:15px;text-decoration:line-through">T</div>
<div class="a" style="left:1611px;top:999px;width:203px;height:1px;background:#b8b8b8"></div>
<div class="a" style="left:1611px;top:1000px;width:203px;height:1px;background:#ececec"></div>
<div class="a" style="left:1611px;top:1009px;width:103px;height:16px;background:#fff;border:1px solid #ededed"></div>
<div class="t" style="left:1616px;top:1012px;font-size:10px;line-height:11px;color:#111">Deutsch: neue ...</div>
<div class="a" style="left:1702px;top:1016px;width:0;height:0;border-left:3.5px solid transparent;border-right:3.5px solid transparent;border-top:4px solid #111"></div>
<div class="t" style="left:1726px;top:1007px;font-family:'Liberation Serif',serif;font-weight:bold;font-size:12px;line-height:12px;color:#111">a</div>
<div class="t" style="left:1732px;top:1010px;font-family:'Liberation Serif',serif;font-weight:bold;font-size:14px;line-height:14px;color:#111">a</div>
<div class="a" style="left:1742px;top:1009px;width:69px;height:16px;background:#fff;border:1px solid #ededed"></div>
<div class="t" style="left:1747px;top:1012px;font-size:10px;line-height:11px;color:#111">Ohne</div>
<div class="a" style="left:1798px;top:1016px;width:0;height:0;border-left:3.5px solid transparent;border-right:3.5px solid transparent;border-top:4px solid #111"></div>
<div class="a" style="left:46px;top:27px;width:357px;height:590px;background:#f0f0f0;border:1px solid #979797;box-shadow:3px 3px 4px rgba(0,0,0,.45)">
<div class="mi" style="left:18.2px;top:5px;letter-spacing:-0.219px;">Neu...</div>
<div class="mi" style="left:300.3px;top:5px;letter-spacing:-0.065px;">Strg+N</div>
<div class="mi" style="left:18.2px;top:24px;letter-spacing:0.010px;">Öffnen...</div>
<div class="mi" style="left:300.3px;top:24px;letter-spacing:-0.177px;">Strg+O</div>
<div class="mi" style="left:18.2px;top:43px;letter-spacing:-0.166px;">In Bridge suchen...</div>
<div class="mi" style="left:277.3px;top:43px;letter-spacing:0.093px;">Alt+Strg+O</div>
<div class="mi" style="left:18.2px;top:62px;letter-spacing:-0.067px;">In Mini Bridge suchen...</div>
<div class="mi" style="left:18.2px;top:81px;letter-spacing:-0.145px;">Öffnen als...</div>
<div class="mi" style="left:219.1px;top:81px;letter-spacing:0.111px;">Alt+Umschalt+Strg+O</div>
<div class="mi" style="left:18.2px;top:100px;letter-spacing:-0.010px;">Als Smart-Objekt öffnen...</div>
<div class="mi" style="left:18.2px;top:119px;letter-spacing:-0.113px;">Letzte Dateien öffnen</div>
<div class="arr" style="top:122px"></div>
<div class="sep" style="top:138px"></div>
<div class="mi" style="left:18.2px;top:147px;letter-spacing:-0.031px;">Meinen Bildschirm freigeben...</div>
<div class="mi" style="left:18.2px;top:166px;letter-spacing:-0.241px;">Neuen Review erstellen...</div>
<div class="mi" style="left:18.2px;top:185px;letter-spacing:-0.230px;">Device Central...</div>
<div class="sep" style="top:205px"></div>
<div class="mi" style="left:18.2px;top:213px;letter-spacing:-0.319px;">Schließen</div>
<div class="mi" style="left:298.3px;top:213px;letter-spacing:-0.174px;">Strg+W</div>
<div class="mi" style="left:18.2px;top:232px;letter-spacing:-0.172px;">Alle schließen</div>
<div class="mi" style="left:275.3px;top:232px;letter-spacing:0.094px;">Alt+Strg+W</div>
<div class="mi" style="left:18.2px;top:251px;letter-spacing:-0.180px;">Schließen und zu Bridge gehen...</div>
<div class="mi" style="left:240.3px;top:251px;letter-spacing:-0.004px;">Umschalt+Strg+W</div>
<div class="mi" style="left:18.2px;top:270px;letter-spacing:-0.283px;">Speichern</div>
<div class="mi" style="left:303.3px;top:270px;letter-spacing:-0.455px;">Strg+S</div>
<div class="mi" style="left:18.2px;top:289px;letter-spacing:-0.142px;">Speichern unter...</div>
<div class="mi" style="left:245.4px;top:289px;letter-spacing:-0.123px;">Umschalt+Strg+S</div>
<div class="mi" style="left:18.2px;top:308px;letter-spacing:-0.257px;color:#8a8a8a;">Einchecken...</div>
<div class="mi" style="left:18.2px;top:327px;letter-spacing:-0.224px;">Für Web und Geräte speichern...</div>
<div class="mi" style="left:222.2px;top:327px;letter-spacing:0.018px;">Alt+Umschalt+Strg+S</div>
<div class="mi" style="left:18.2px;top:346px;letter-spacing:-0.132px;">Zurück zur letzten Version</div>
<div class="mi" style="left:320.5px;top:346px;letter-spacing:-1.196px;">F12</div>
<div class="sep" style="top:365px"></div>
<div class="a" style="left:1px;top:371px;width:353px;height:19px;background:#3399ff"></div>
<div class="mi" style="left:18.2px;top:374px;letter-spacing:-0.290px;color:#fff;">Platzieren...</div>
<div class="sep" style="top:393px"></div>
<div class="mi" style="left:18.2px;top:403px;letter-spacing:0.082px;">Importieren</div>
<div class="arr" style="top:406px"></div>
<div class="mi" style="left:18.2px;top:422px;letter-spacing:-0.252px;">Exportieren</div>
<div class="arr" style="top:425px"></div>
<div class="sep" style="top:440px"></div>
<div class="mi" style="left:18.2px;top:450px;letter-spacing:0.025px;">Automatisieren</div>
<div class="arr" style="top:453px"></div>
<div class="mi" style="left:18.2px;top:469px;letter-spacing:-0.204px;">Skripten</div>
<div class="arr" style="top:472px"></div>
<div class="sep" style="top:487px"></div>
<div class="mi" style="left:18.2px;top:496px;letter-spacing:0.046px;">Dateiinformationen...</div>
<div class="mi" style="left:225.2px;top:496px;letter-spacing:0.106px;">Alt+Umschalt+Strg+I</div>
<div class="sep" style="top:515px"></div>
<div class="mi" style="left:18.2px;top:524px;letter-spacing:-0.219px;">Drucken...</div>
<div class="mi" style="left:302.3px;top:524px;letter-spacing:-0.289px;">Strg+P</div>
<div class="mi" style="left:18.2px;top:543px;letter-spacing:-0.204px;">Eine Kopie drucken</div>
<div class="mi" style="left:221.1px;top:543px;letter-spacing:0.076px;">Alt+Umschalt+Strg+P</div>
<div class="sep" style="top:563px"></div>
<div class="mi" style="left:18.2px;top:571px;letter-spacing:-0.364px;">Beenden</div>
<div class="mi" style="left:300.3px;top:571px;letter-spacing:-0.177px;">Strg+Q</div>
</div>
</body></html>
